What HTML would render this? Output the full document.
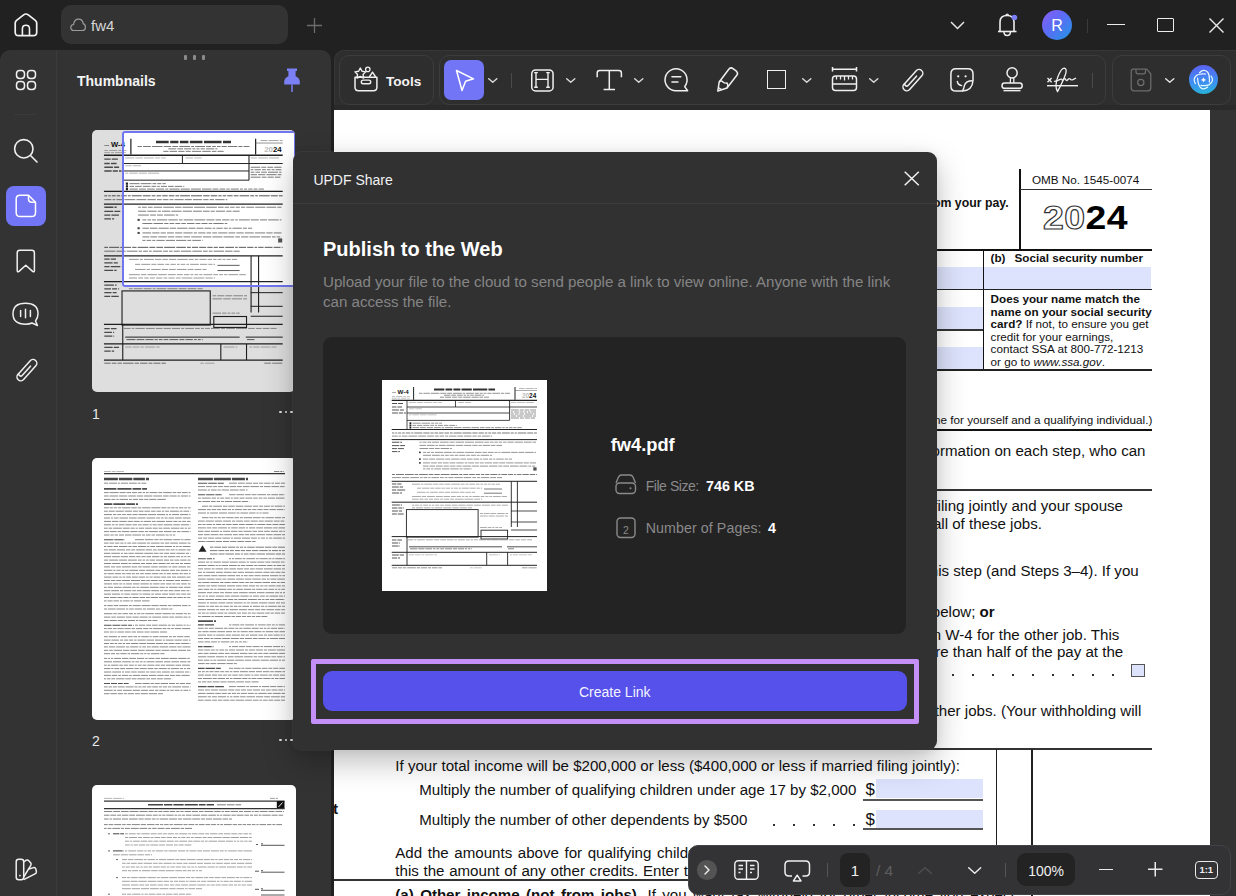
<!DOCTYPE html><html><head><meta charset="utf-8"><style>
html,body{margin:0;padding:0;}
body{width:1236px;height:896px;overflow:hidden;position:relative;background:#212121;font-family:"Liberation Sans",sans-serif;}
</style></head><body>
<svg style="position:absolute;left:14px;top:12px;width:24px;height:25px;overflow:visible" viewBox="0 0 24 25" ><path d="M1.2 11 Q1.2 9.4 2.6 8.3 L9.6 2.9 Q11.95 1.1 14.3 2.9 L21.3 8.3 Q22.7 9.4 22.7 11 V20.2 Q22.7 23.7 19.2 23.7 H4.7 Q1.2 23.7 1.2 20.2 Z" fill="none" stroke="#f2f2f2" stroke-width="1.7" stroke-linejoin="round"/><path d="M8.4 23.7 V16.8 Q8.4 13.2 11.95 13.2 Q15.5 13.2 15.5 16.8 V23.7" fill="none" stroke="#f2f2f2" stroke-width="1.6"/></svg>
<div style="position:absolute;left:61px;top:5px;width:227px;height:39px;border-radius:10px;background:#333333"></div>
<svg style="position:absolute;left:70px;top:18px;width:16px;height:14px;overflow:visible" viewBox="0 0 16 14" ><path d="M4 12.5 Q0.8 12.5 0.8 9.5 Q0.8 6.8 3.6 6.5 Q4.2 1.2 8.6 1.2 Q12.6 1.2 13.2 5.6 Q15.4 6.2 15.4 9.2 Q15.4 12.5 12 12.5 Z" fill="none" stroke="#9c9c9c" stroke-width="1.2"/></svg>
<div style="position:absolute;left:91px;top:17.42px;font-size:15px;line-height:17.25px;height:17.25px;color:#d6d6d6;font-weight:normal;white-space:nowrap;font-family:'Liberation Sans', sans-serif;">fw4</div>
<svg style="position:absolute;left:307px;top:18px;width:15px;height:15px;overflow:visible" viewBox="0 0 15 15" ><path d="M7.5 0 V15 M0 7.5 H15" stroke="#6c6c6c" stroke-width="1.3"/></svg>
<svg style="position:absolute;left:950px;top:21px;width:15px;height:9px;overflow:visible" viewBox="0 0 15 9" ><path d="M1 1 L7.5 7.5 L14 1" fill="none" stroke="#e6e6e6" stroke-width="1.5"/></svg>
<svg style="position:absolute;left:997px;top:12px;width:22px;height:25px;overflow:visible" viewBox="0 0 22 25" ><path d="M3 19 V10 Q3 3.5 10 3.5 Q17 3.5 17 10 V19" fill="none" stroke="#ededed" stroke-width="1.6"/><path d="M1 19.5 H19.5" stroke="#ededed" stroke-width="1.6"/><path d="M7 20 Q7 23.5 10.2 23.5 Q13.4 23.5 13.4 20" fill="none" stroke="#ededed" stroke-width="1.5"/><path d="M8.6 3.5 Q10.2 0.8 11.8 3.5" fill="none" stroke="#ededed" stroke-width="1.4"/><circle cx="17.4" cy="5.5" r="2.8" fill="#7b80f6"/></svg>
<div style="position:absolute;left:1042px;top:10px;width:30px;height:30px;border-radius:50%;background:linear-gradient(135deg,#8b5cf6 0%,#5b6cf5 45%,#1e98e4 100%)"></div>
<div style="position:absolute;left:1051px;top:17.02px;font-size:16px;line-height:18.40px;height:18.40px;color:#ffffff;font-weight:normal;white-space:nowrap;font-family:'Liberation Sans', sans-serif;width:12px;text-align:center">R</div>
<div style="position:absolute;left:1087px;top:19px;width:1px;height:14px;background:#3a3a3a"></div>
<div style="position:absolute;left:1107px;top:23.5px;width:18px;height:1.6px;background:#ececec"></div>
<div style="position:absolute;left:1157px;top:17.5px;width:15px;height:12px;border:1.6px solid #ececec;border-radius:1px"></div>
<svg style="position:absolute;left:1209px;top:18px;width:15px;height:15px;overflow:visible" viewBox="0 0 15 15" ><path d="M0.5 0.5 L14.5 14.5 M14.5 0.5 L0.5 14.5" stroke="#ececec" stroke-width="1.4"/></svg>
<div style="position:absolute;left:0;top:50px;width:331px;height:860px;border-radius:10px 10px 0 0;background:#333333"></div>
<div style="position:absolute;left:56px;top:50px;width:1px;height:846px;background:#3b3b3b"></div>
<svg style="position:absolute;left:15px;top:69px;width:22px;height:22px;overflow:visible" viewBox="0 0 22 22" ><rect x="1.5" y="1.5" width="8" height="8" rx="3.2" fill="none" stroke="#f0f0f0" stroke-width="1.5"/><rect x="1.5" y="12.5" width="8" height="8" rx="3.2" fill="none" stroke="#f0f0f0" stroke-width="1.5"/><rect x="12.5" y="1.5" width="8" height="8" rx="3.2" fill="none" stroke="#f0f0f0" stroke-width="1.5"/><rect x="12.5" y="12.5" width="8" height="8" rx="3.2" fill="none" stroke="#f0f0f0" stroke-width="1.5"/></svg>
<div style="position:absolute;left:14px;top:114px;width:23px;height:1px;background:#3a3a3a"></div>
<svg style="position:absolute;left:13px;top:138px;width:26px;height:26px;overflow:visible" viewBox="0 0 26 26" ><circle cx="10.8" cy="10.8" r="9.2" fill="none" stroke="#f0f0f0" stroke-width="1.6"/><path d="M17.5 17.5 L24 24" stroke="#f0f0f0" stroke-width="1.6" stroke-linecap="round"/></svg>
<div style="position:absolute;left:6px;top:186px;width:40px;height:40px;border-radius:8px;background:#7276f6"></div>
<svg style="position:absolute;left:15px;top:194px;width:22px;height:24px;overflow:visible" viewBox="0 0 22 24" ><path d="M5 1.2 H13.5 L20.5 8.2 V18.5 Q20.5 22.6 16.5 22.6 H5 Q1.2 22.6 1.2 18.5 V5 Q1.2 1.2 5 1.2 Z" fill="none" stroke="#fff" stroke-width="1.5" stroke-linejoin="round"/><path d="M13.5 1.2 V5 Q13.5 8.2 16.8 8.2 H20.5" fill="none" stroke="#fff" stroke-width="1.5"/></svg>
<svg style="position:absolute;left:16px;top:249px;width:20px;height:25px;overflow:visible" viewBox="0 0 20 25" ><path d="M1.2 3.8 Q1.2 1.2 3.8 1.2 H15.8 Q18.4 1.2 18.4 3.8 V21.6 Q18.4 23.6 16.6 22.4 L9.8 16.2 L3 22.4 Q1.2 23.6 1.2 21.6 Z" fill="none" stroke="#f0f0f0" stroke-width="1.5" stroke-linejoin="round"/></svg>
<svg style="position:absolute;left:12px;top:302px;width:27px;height:25px;overflow:visible" viewBox="0 0 27 25" ><path d="M23.5 19 Q26 16 26 11.8 Q26 1.2 13.5 1.2 Q1 1.2 1 11.8 Q1 22.2 13.5 22.2 Q17.5 22.2 20 21 L25.5 23.5 Z" fill="none" stroke="#f0f0f0" stroke-width="1.5" stroke-linejoin="round"/><path d="M8.6 8.5 V14.5 M13.5 7.3 V15.7 M18.4 8.5 V14.5" stroke="#f0f0f0" stroke-width="1.5" stroke-linecap="round"/></svg>
<svg style="position:absolute;left:16px;top:358px;width:22px;height:24px;overflow:visible" viewBox="-11 -12 22 24" ><g transform="rotate(42)"><path d="M0 -5.2 V7.3 A1.9 1.9 0 0 1 -3.8 7.3 V-9 A3.8 3.8 0 0 1 3.8 -9 V9.3 A3.8 3.8 0 0 1 -3.8 9.3 V7" fill="none" stroke="#f0f0f0" stroke-width="1.5" stroke-linecap="round"/></g></svg>
<svg style="position:absolute;left:15px;top:858px;width:23px;height:23px;overflow:visible" viewBox="0 0 23 23" ><rect x="1.2" y="1.2" width="7.5" height="20.5" rx="2.5" fill="none" stroke="#f0f0f0" stroke-width="1.5"/><path d="M8.7 4 L11.2 2.2 Q12.5 1.5 13.6 2.6 L15.8 5 Q16.5 6.2 15.8 7.3 L8.7 19" fill="none" stroke="#f0f0f0" stroke-width="1.5" stroke-linejoin="round"/><path d="M13 11.2 L18.6 9.6 Q20.2 9.3 20.8 10.8 L21.4 13.6 Q21.6 15.3 20 15.8 L8.7 21.7" fill="none" stroke="#f0f0f0" stroke-width="1.5" stroke-linejoin="round"/><circle cx="4.9" cy="17.6" r="0.9" fill="#f0f0f0"/></svg>
<div style="position:absolute;left:184px;top:55px;width:3px;height:5px;border-radius:1px;background:#8a8a8a"></div>
<div style="position:absolute;left:193px;top:55px;width:3px;height:5px;border-radius:1px;background:#8a8a8a"></div>
<div style="position:absolute;left:202px;top:55px;width:3px;height:5px;border-radius:1px;background:#8a8a8a"></div>
<div style="position:absolute;left:77px;top:73.03px;font-size:14px;line-height:16.10px;height:16.10px;color:#f4f4f4;font-weight:bold;white-space:nowrap;font-family:'Liberation Sans', sans-serif;">Thumbnails</div>
<svg style="position:absolute;left:283px;top:68px;width:18px;height:25px;overflow:visible" viewBox="0 0 18 25" ><path d="M4 0.5 H14 V3 H12.6 V8.2 Q16.8 10 16.8 14 V16.6 H1.2 V14 Q1.2 10 5.4 8.2 V3 H4 Z" fill="#7b80f7"/><path d="M9 16.5 V24" stroke="#7b80f7" stroke-width="1.5"/></svg>
<div style="position:absolute;left:92px;top:406.33px;font-size:14px;line-height:16.10px;height:16.10px;color:#e8e8e8;font-weight:normal;white-space:nowrap;font-family:'Liberation Sans', sans-serif;">1</div>
<div style="position:absolute;left:92px;top:732.83px;font-size:14px;line-height:16.10px;height:16.10px;color:#e8e8e8;font-weight:normal;white-space:nowrap;font-family:'Liberation Sans', sans-serif;">2</div>
<div style="position:absolute;left:279px;top:410.7px;width:2.6px;height:2.6px;border-radius:50%;background:#e0e0e0"></div>
<div style="position:absolute;left:284.5px;top:410.7px;width:2.6px;height:2.6px;border-radius:50%;background:#e0e0e0"></div>
<div style="position:absolute;left:290px;top:410.7px;width:2.6px;height:2.6px;border-radius:50%;background:#e0e0e0"></div>
<div style="position:absolute;left:279px;top:738.7px;width:2.6px;height:2.6px;border-radius:50%;background:#e0e0e0"></div>
<div style="position:absolute;left:284.5px;top:738.7px;width:2.6px;height:2.6px;border-radius:50%;background:#e0e0e0"></div>
<div style="position:absolute;left:290px;top:738.7px;width:2.6px;height:2.6px;border-radius:50%;background:#e0e0e0"></div>
<div style="position:absolute;left:92px;top:130px;width:203px;height:262px;border-radius:5px;background:#fff;overflow:hidden"><svg width="100%" height="100%" viewBox="0 0 165 211" preserveAspectRatio="none" style="position:absolute;left:0;top:0"><text x="15.5" y="13.6" font-size="6.2" font-weight="bold" font-family="Liberation Sans" fill="#111">W-4</text><path d="M10 12.5 H14" stroke="#999" stroke-width="0.8" stroke-dasharray="4.27 0.90"/><path d="M10 16.5 H28" stroke="#aaa" stroke-width="0.7" stroke-dasharray="3.06 0.90 6.56 0.90 2.51 0.90 5.75 0.90"/><path d="M10 18.2 H28" stroke="#aaa" stroke-width="0.7" stroke-dasharray="4.56 0.90 2.41 0.90 5.55 0.90 2.26 0.90"/><path d="M31.6 7 V19.8" stroke="#222" stroke-width="1.0"/><path d="M52 9.6 H113" stroke="#333" stroke-width="2.0" stroke-dasharray="10.34 1.20 6.70 1.20 6.91 1.20 10.25 1.20 14.27 1.20 7.24 1.20"/><path d="M37 13.3 H128" stroke="#777" stroke-width="0.8" stroke-dasharray="3.56 0.90 6.39 0.90 8.63 0.90 6.04 0.90 4.78 0.90 8.83 0.90 2.33 0.90 8.01 0.90 4.03 0.90 3.01 0.90 2.82 0.90 4.16 0.90 7.71 0.90 3.27 0.90 6.07 0.90"/><path d="M62 15.2 H102" stroke="#777" stroke-width="0.8" stroke-dasharray="6.47 0.90 4.61 0.90 5.83 0.90 2.44 0.90 2.42 0.90 3.44 0.90 6.76 0.90 4.99 0.90"/><path d="M58 17.2 H107" stroke="#777" stroke-width="0.8" stroke-dasharray="4.20 0.90 6.10 0.90 5.17 0.90 4.10 0.90 7.56 0.90 6.89 0.90 3.71 0.90 6.02 0.90"/><path d="M133 7 V19.8" stroke="#222" stroke-width="1.0"/><path d="M137 8.5 H155" stroke="#999" stroke-width="0.7" stroke-dasharray="5.68 0.90 8.13 0.90 7.11 0.90"/><path d="M133 10.5 H155" stroke="#555" stroke-width="0.5"/><text x="140" y="17.6" font-size="6.4" font-weight="bold" font-family="Liberation Sans" fill="#111"><tspan fill="#bbb">20</tspan>24</text><path d="M9.7 20.3 H155" stroke="#222" stroke-width="1.2"/><path d="M10 23.5 H21" stroke="#555" stroke-width="1.1" stroke-dasharray="5.15 0.90 7.92 0.90"/><path d="M10 27 H20" stroke="#555" stroke-width="1.1" stroke-dasharray="4.47 0.90 5.67 0.90"/><path d="M10 30 H22" stroke="#555" stroke-width="1.1" stroke-dasharray="7.03 0.90 4.61 0.90"/><path d="M10 33 H24" stroke="#555" stroke-width="1.1" stroke-dasharray="5.96 0.90 4.16 0.90 6.67 0.90"/><path d="M25 27 H155" stroke="#222" stroke-width="0.8"/><path d="M25 33 H127.6" stroke="#222" stroke-width="0.8"/><path d="M25 40.4 H127.6" stroke="#222" stroke-width="0.8"/><path d="M25 20.3 V49.5" stroke="#222" stroke-width="0.8"/><path d="M73.5 20.3 V27" stroke="#222" stroke-width="0.8"/><path d="M127.6 20.3 V40.4" stroke="#222" stroke-width="0.9"/><path d="M27 22.5 H60" stroke="#999" stroke-width="0.6" stroke-dasharray="7.35 0.90 6.01 0.90 8.13 0.90 4.20 0.90 6.87 0.90"/><path d="M76 22.5 H90" stroke="#999" stroke-width="0.6" stroke-dasharray="6.16 0.90 6.06 0.90"/><path d="M129 22.5 H152" stroke="#999" stroke-width="0.6" stroke-dasharray="5.19 0.90 7.88 0.90 8.61 0.90"/><path d="M27 28.8 H40" stroke="#999" stroke-width="0.6" stroke-dasharray="5.32 0.90 6.65 0.90"/><path d="M27 34.8 H55" stroke="#999" stroke-width="0.6" stroke-dasharray="2.42 0.90 6.91 0.90 6.53 0.90 8.95 0.90"/><path d="M129 30 H154" stroke="#777" stroke-width="0.8" stroke-dasharray="7.75 0.90 3.99 0.90 4.70 0.90 6.68 0.90"/><path d="M129 32 H154" stroke="#777" stroke-width="0.8" stroke-dasharray="2.16 0.90 5.23 0.90 3.18 0.90 2.82 0.90 2.41 0.90 7.38 0.90"/><path d="M129 34 H154" stroke="#777" stroke-width="0.8" stroke-dasharray="2.91 0.90 3.73 0.90 4.74 0.90 8.10 0.90 2.56 0.90"/><path d="M129 36 H154" stroke="#777" stroke-width="0.8" stroke-dasharray="5.14 0.90 5.85 0.90 8.18 0.90 7.73 0.90"/><path d="M129 38 H154" stroke="#777" stroke-width="0.8" stroke-dasharray="8.05 0.90 3.95 0.90 4.91 0.90 4.51 0.90"/><rect x="27.5" y="42.300000000000004" width="1.8" height="1.8" fill="#222"/><path d="M30.5 43.2 H60" stroke="#666" stroke-width="0.7" stroke-dasharray="8.19 0.90 8.70 0.90 3.06 0.90 3.23 0.90 3.62 0.90"/><rect x="27.5" y="44.5" width="1.8" height="1.8" fill="#222"/><path d="M30.5 45.4 H75" stroke="#666" stroke-width="0.7" stroke-dasharray="3.63 0.90 5.39 0.90 6.12 0.90 3.84 0.90 2.03 0.90 4.93 0.90 4.58 0.90 5.96 0.90 8.67 0.90"/><rect x="27.5" y="46.7" width="1.8" height="1.8" fill="#222"/><path d="M30.5 47.6 H140" stroke="#666" stroke-width="0.7" stroke-dasharray="6.83 0.90 5.61 0.90 6.32 0.90 6.73 0.90 2.38 0.90 8.30 0.90 7.46 0.90 8.12 0.90 7.59 0.90 4.75 0.90 4.79 0.90 2.72 0.90 6.44 0.90 2.44 0.90 2.47 0.90 3.46 0.90 3.14 0.90 4.38 0.90"/><path d="M9.7 49.5 H155" stroke="#222" stroke-width="1.0"/><path d="M10 53.0 H155" stroke="#555" stroke-width="0.8" stroke-dasharray="2.37 0.90 2.00 0.90 3.06 0.90 2.71 0.90 4.55 0.90 2.18 0.90 8.12 0.90 6.30 0.90 3.04 0.90 3.77 0.90 4.43 0.90 4.55 0.90 2.86 0.90 7.94 0.90 8.95 0.90 5.26 0.90 5.39 0.90 2.60 0.90 2.72 0.90 4.40 0.90 3.85 0.90 7.80 0.90 3.13 0.90 2.16 0.90 8.66 0.90 5.70 0.90 3.03 0.90"/><path d="M10 56.1 H110" stroke="#777" stroke-width="0.8" stroke-dasharray="5.80 0.90 2.19 0.90 5.70 0.90 8.85 0.90 8.04 0.90 6.87 0.90 3.83 0.90 4.57 0.90 3.17 0.90 7.40 0.90 5.73 0.90 7.45 0.90 4.31 0.90 3.56 0.90 7.68 0.90 8.89 0.90"/><path d="M9.7 59.6 H155" stroke="#222" stroke-width="1.0"/><path d="M10 62.2 H20" stroke="#555" stroke-width="1.1" stroke-dasharray="7.41 0.90 7.22 0.90"/><path d="M10 65.6 H23" stroke="#555" stroke-width="1.0" stroke-dasharray="7.27 0.90 6.96 0.90"/><path d="M10 68.6 H22" stroke="#555" stroke-width="1.0" stroke-dasharray="4.91 0.90 6.07 0.90"/><path d="M10 71.6 H18" stroke="#555" stroke-width="1.0" stroke-dasharray="5.42 0.90 4.12 0.90"/><path d="M37.5 62.2 H154" stroke="#7a7a7a" stroke-width="0.8" stroke-dasharray="2.20 0.90 3.96 0.90 3.81 0.90 6.85 0.90 8.70 0.90 5.13 0.90 8.56 0.90 8.92 0.90 8.69 0.90 4.55 0.90 3.54 0.90 3.59 0.90 3.38 0.90 3.43 0.90 6.37 0.90 8.30 0.90 7.88 0.90 5.36 0.90"/><path d="M37.5 65.4 H120" stroke="#7a7a7a" stroke-width="0.8" stroke-dasharray="6.57 0.90 7.60 0.90 2.59 0.90 6.62 0.90 8.37 0.90 7.48 0.90 7.25 0.90 5.35 0.90 3.25 0.90 7.52 0.90 4.33 0.90 7.61 0.90"/><path d="M37.5 68.5 H70" stroke="#7a7a7a" stroke-width="0.8" stroke-dasharray="8.80 0.90 4.77 0.90 4.81 0.90 8.63 0.90 7.07 0.90"/><path d="M41 72.4 H154" stroke="#7a7a7a" stroke-width="0.8" stroke-dasharray="3.19 0.90 2.89 0.90 3.06 0.90 8.33 0.90 7.65 0.90 3.02 0.90 7.79 0.90 8.86 0.90 6.60 0.90 4.45 0.90 5.84 0.90 2.92 0.90 2.10 0.90 8.80 0.90 6.55 0.90 5.69 0.90 8.54 0.90 5.04 0.90"/><path d="M41 75.3 H110" stroke="#7a7a7a" stroke-width="0.8" stroke-dasharray="8.10 0.90 7.78 0.90 3.48 0.90 3.76 0.90 4.05 0.90 3.68 0.90 6.11 0.90 3.82 0.90 4.93 0.90 2.92 0.90 8.37 0.90 4.48 0.90"/><path d="M41 79.1 H130" stroke="#7a7a7a" stroke-width="0.8" stroke-dasharray="5.21 0.90 6.08 0.90 8.33 0.90 4.94 0.90 8.42 0.90 5.51 0.90 5.72 0.90 5.66 0.90 2.13 0.90 5.08 0.90 3.28 0.90 2.03 0.90 7.59 0.90 3.21 0.90 5.31 0.90"/><path d="M41 82.9 H154" stroke="#7a7a7a" stroke-width="0.8" stroke-dasharray="7.08 0.90 5.90 0.90 4.28 0.90 5.63 0.90 5.89 0.90 7.49 0.90 2.74 0.90 5.92 0.90 3.74 0.90 3.94 0.90 7.41 0.90 5.55 0.90 5.93 0.90 7.32 0.90 8.39 0.90 5.10 0.90 6.29 0.90"/><path d="M41 86.1 H154" stroke="#7a7a7a" stroke-width="0.8" stroke-dasharray="5.54 0.90 5.59 0.90 6.85 0.90 5.17 0.90 5.73 0.90 5.35 0.90 8.59 0.90 6.89 0.90 8.14 0.90 8.60 0.90 3.82 0.90 5.92 0.90 8.60 0.90 7.88 0.90 2.96 0.90 2.85 0.90 5.09 0.90"/><path d="M41 88.9 H90" stroke="#7a7a7a" stroke-width="0.8" stroke-dasharray="2.51 0.90 3.68 0.90 2.51 0.90 6.69 0.90 7.49 0.90 8.28 0.90 3.08 0.90 7.01 0.90 6.62 0.90"/><rect x="37" y="71.60000000000001" width="1.8" height="1.6" fill="#444"/><rect x="37" y="78.3" width="1.8" height="1.6" fill="#444"/><rect x="37" y="82.10000000000001" width="1.8" height="1.6" fill="#444"/><rect x="151.3" y="87.3" width="3.3" height="3.3" fill="#555"/><path d="M10 94.5 H155" stroke="#555" stroke-width="0.8" stroke-dasharray="3.00 0.90 8.18 0.90 8.77 0.90 3.54 0.90 8.67 0.90 4.79 0.90 5.41 0.90 8.93 0.90 7.83 0.90 3.13 0.90 5.02 0.90 5.61 0.90 4.37 0.90 3.37 0.90 4.23 0.90 7.06 0.90 2.14 0.90 5.88 0.90 5.08 0.90 2.13 0.90 4.32 0.90 6.37 0.90 5.59 0.90 2.45 0.90"/><path d="M10 97.6 H120" stroke="#777" stroke-width="0.8" stroke-dasharray="8.90 0.90 7.52 0.90 8.80 0.90 2.73 0.90 3.86 0.90 2.28 0.90 7.45 0.90 3.89 0.90 2.91 0.90 4.96 0.90 8.38 0.90 7.73 0.90 3.81 0.90 3.05 0.90 8.43 0.90 5.99 0.90 6.90 0.90"/><path d="M9.7 101.3 H155" stroke="#222" stroke-width="1.0"/><path d="M10 104 H20" stroke="#555" stroke-width="1.0" stroke-dasharray="4.36 0.90 4.23 0.90"/><path d="M10 107 H21" stroke="#555" stroke-width="1.0" stroke-dasharray="6.75 0.90 5.70 0.90"/><path d="M10 110 H24" stroke="#555" stroke-width="1.0" stroke-dasharray="4.29 0.90 7.75 0.90 6.54 0.90"/><path d="M10 113 H20" stroke="#555" stroke-width="1.0" stroke-dasharray="7.21 0.90 4.33 0.90"/><path d="M30 104.2 H118" stroke="#888" stroke-width="0.7" stroke-dasharray="7.99 0.90 2.47 0.90 8.04 0.90 5.18 0.90 4.37 0.90 5.87 0.90 8.49 0.90 3.88 0.90 2.90 0.90 5.69 0.90 3.67 0.90 2.77 0.90 3.13 0.90 2.35 0.90 3.41 0.90 4.18 0.90"/><path d="M35 108.2 H100" stroke="#888" stroke-width="0.7" stroke-dasharray="4.14 0.90 7.32 0.90 4.03 0.90 5.50 0.90 3.25 0.90 4.43 0.90 2.13 0.90 3.75 0.90 2.11 0.90 7.13 0.90 5.86 0.90 3.33 0.90 5.32 0.90"/><path d="M35 112.3 H93" stroke="#888" stroke-width="0.7" stroke-dasharray="8.54 0.90 2.74 0.90 7.73 0.90 5.03 0.90 5.47 0.90 7.84 0.90 4.75 0.90 5.55 0.90 6.81 0.90"/><path d="M102 109 H120" stroke="#444" stroke-width="0.7"/><path d="M102 113.2 H120" stroke="#444" stroke-width="0.7"/><path d="M30 116.5 H125" stroke="#888" stroke-width="0.7" stroke-dasharray="8.88 0.90 4.40 0.90 7.83 0.90 6.95 0.90 6.45 0.90 4.83 0.90 4.43 0.90 2.38 0.90 2.91 0.90 2.50 0.90 7.19 0.90 3.79 0.90 3.14 0.90 2.59 0.90 7.89 0.90 8.09 0.90"/><path d="M30 119.2 H100" stroke="#888" stroke-width="0.7" stroke-dasharray="6.69 0.90 3.97 0.90 3.70 0.90 4.05 0.90 5.22 0.90 3.10 0.90 5.12 0.90 3.84 0.90 8.73 0.90 8.81 0.90 5.83 0.90 3.71 0.90"/><path d="M129.3 101.3 V147" stroke="#222" stroke-width="0.9"/><path d="M135.4 101.3 V147" stroke="#222" stroke-width="0.9"/><path d="M9.7 122.2 H155" stroke="#222" stroke-width="1.0"/><path d="M10 125 H20" stroke="#555" stroke-width="1.0" stroke-dasharray="7.86 0.90 5.24 0.90"/><path d="M10 128 H22" stroke="#555" stroke-width="1.0" stroke-dasharray="5.43 0.90 4.00 0.90 5.53 0.90"/><path d="M10 131 H20" stroke="#555" stroke-width="1.0" stroke-dasharray="5.90 0.90 6.01 0.90"/><path d="M10 134 H22" stroke="#555" stroke-width="1.0" stroke-dasharray="4.80 0.90 6.02 0.90"/><path d="M30 125.2 H126" stroke="#888" stroke-width="0.7" stroke-dasharray="2.03 0.90 3.85 0.90 2.63 0.90 4.80 0.90 2.29 0.90 2.16 0.90 4.13 0.90 3.63 0.90 6.10 0.90 5.70 0.90 7.25 0.90 6.60 0.90 7.01 0.90 8.15 0.90 4.73 0.90 4.28 0.90 8.89 0.90"/><path d="M30 127.8 H90" stroke="#888" stroke-width="0.7" stroke-dasharray="3.05 0.90 7.07 0.90 6.50 0.90 2.31 0.90 7.85 0.90 8.24 0.90 6.39 0.90 7.14 0.90 7.69 0.90"/><rect x="24.4" y="129.6" width="71.7" height="27.5" fill="none" stroke="#222" stroke-width="0.9"/><path d="M98 133.5 H126" stroke="#888" stroke-width="0.7" stroke-dasharray="2.98 0.90 5.67 0.90 5.53 0.90 7.84 0.90 7.63 0.90"/><path d="M98 136 H126" stroke="#888" stroke-width="0.7" stroke-dasharray="7.78 0.90 6.09 0.90 8.25 0.90 6.78 0.90"/><path d="M98 147.5 H120" stroke="#888" stroke-width="0.7" stroke-dasharray="6.85 0.90 3.61 0.90 2.22 0.90 2.93 0.90 4.52 0.90"/><rect x="99" y="150.2" width="26.6" height="8.8" fill="none" stroke="#222" stroke-width="0.9"/><path d="M129 131 H155" stroke="#222" stroke-width="0.8"/><path d="M129 142 H155" stroke="#222" stroke-width="0.8"/><path d="M129 150 H155" stroke="#222" stroke-width="0.8"/><path d="M9.7 156.6 H155" stroke="#222" stroke-width="1.0"/><path d="M10 160 H20" stroke="#555" stroke-width="1.0" stroke-dasharray="4.42 0.90 7.34 0.90"/><path d="M10 163 H18" stroke="#555" stroke-width="1.0" stroke-dasharray="6.23 0.90 6.51 0.90"/><path d="M10 166 H18" stroke="#555" stroke-width="1.0" stroke-dasharray="6.50 0.90 6.72 0.90"/><path d="M26 159.8 H150" stroke="#888" stroke-width="0.7" stroke-dasharray="5.43 0.90 2.02 0.90 7.58 0.90 7.24 0.90 5.52 0.90 5.75 0.90 6.62 0.90 2.46 0.90 7.16 0.90 3.77 0.90 2.52 0.90 3.86 0.90 7.11 0.90 3.44 0.90 7.18 0.90 8.83 0.90 5.46 0.90 4.68 0.90 5.35 0.90 6.79 0.90"/><path d="M27 166.8 H120" stroke="#222" stroke-width="0.8"/><path d="M125 166.8 H155" stroke="#222" stroke-width="0.8"/><path d="M28 168.8 H90" stroke="#666" stroke-width="0.8" stroke-dasharray="7.37 0.90 6.32 0.90 6.50 0.90 2.54 0.90 3.03 0.90 3.78 0.90 7.20 0.90 4.13 0.90 5.97 0.90 2.09 0.90 2.42 0.90 3.88 0.90"/><path d="M126 168.8 H132" stroke="#666" stroke-width="0.8" stroke-dasharray="6.70 0.90"/><path d="M25 156.6 V185.3" stroke="#222" stroke-width="0.9"/><path d="M9.7 172.3 H155" stroke="#222" stroke-width="1.0"/><path d="M10 175 H22" stroke="#555" stroke-width="1.0" stroke-dasharray="6.77 0.90 6.70 0.90"/><path d="M10 178 H18" stroke="#555" stroke-width="1.0" stroke-dasharray="5.16 0.90 6.07 0.90"/><path d="M27 174.8 H55" stroke="#999" stroke-width="0.6" stroke-dasharray="5.25 0.90 5.26 0.90 2.83 0.90 8.26 0.90 3.39 0.90"/><path d="M107 174.8 H118" stroke="#999" stroke-width="0.6" stroke-dasharray="8.85 0.90 8.55 0.90"/><path d="M128 174.8 H150" stroke="#999" stroke-width="0.6" stroke-dasharray="2.12 0.90 5.21 0.90 7.74 0.90 8.78 0.90"/><path d="M104.7 172.3 V185.3" stroke="#222" stroke-width="0.9"/><path d="M125.6 172.3 V185.3" stroke="#222" stroke-width="0.9"/><path d="M9.7 185.3 H155" stroke="#222" stroke-width="1.0"/><path d="M10 187.8 H60" stroke="#666" stroke-width="0.7" stroke-dasharray="5.15 0.90 3.88 0.90 3.47 0.90 8.62 0.90 3.47 0.90 6.07 0.90 2.99 0.90 5.67 0.90 8.67 0.90"/><path d="M88 187.8 H100" stroke="#999" stroke-width="0.6" stroke-dasharray="2.93 0.90 7.74 0.90"/><path d="M140 187.8 H155" stroke="#777" stroke-width="0.7" stroke-dasharray="5.56 0.90 8.21 0.90"/></svg><div style="position:absolute;left:29.5px;top:1px;width:174px;height:156px;box-sizing:border-box;border:2.2px solid #7076ef;border-radius:3px;box-shadow:0 0 0 400px rgba(0,0,0,0.13)"></div></div>
<div style="position:absolute;left:92px;top:457.5px;width:204px;height:262px;border-radius:5px;background:#fff;overflow:hidden"><svg width="100%" height="100%" viewBox="0 0 204 262" preserveAspectRatio="none" style="position:absolute;left:0;top:0"><path d="M12 13.5 H32" stroke="#999" stroke-width="0.7" stroke-dasharray="6.92 0.90 3.62 0.90 8.28 0.90"/><path d="M182 13.5 H192" stroke="#666" stroke-width="0.8" stroke-dasharray="5.40 0.90 2.17 0.90 2.03 0.90"/><path d="M12 15.6 H193" stroke="#333" stroke-width="1.3"/><path d="M12 21 H57" stroke="#474747" stroke-width="2.3" stroke-dasharray="13.90 1.00 13.41 1.00 11.62 1.00 9.69 1.00"/><path d="M12 25.2 H54.313903966309496" stroke="#8a8a8a" stroke-width="1.0" stroke-dasharray="4.21 0.90 7.88 0.90 2.01 0.90 7.26 0.90 7.87 0.90 2.84 0.90 8.48 0.90"/><path d="M12 30.9 H55" stroke="#505050" stroke-width="1.7" stroke-dasharray="12.42 1.00 14.11 1.00 8.61 1.00 9.35 1.00"/><path d="M12 34.6 H98.5" stroke="#8a8a8a" stroke-width="1.0" stroke-dasharray="4.75 0.90 8.99 0.90 6.12 0.90 4.52 0.90 5.00 0.90 3.93 0.90 2.34 0.90 2.71 0.90 7.84 0.90 4.00 0.90 8.55 0.90 3.75 0.90 3.86 0.90 5.58 0.90 3.33 0.90"/><path d="M12 38.0 H98.5" stroke="#8a8a8a" stroke-width="1.0" stroke-dasharray="4.61 0.90 8.69 0.90 8.19 0.90 7.68 0.90 6.42 0.90 8.39 0.90 8.58 0.90 5.84 0.90 7.04 0.90 2.35 0.90 7.13 0.90 5.16 0.90"/><path d="M12 41.4 H73.75818053962729" stroke="#8a8a8a" stroke-width="1.0" stroke-dasharray="6.51 0.90 4.00 0.90 2.34 0.90 8.49 0.90 2.89 0.90 5.31 0.90 4.41 0.90 4.08 0.90 7.17 0.90 8.83 0.90"/><path d="M12 46.099999999999994 H46" stroke="#505050" stroke-width="1.7" stroke-dasharray="8.34 1.00 11.90 1.00 8.71 1.00 11.02 1.00"/><path d="M12 49.8 H98.5" stroke="#8a8a8a" stroke-width="1.0" stroke-dasharray="4.76 0.90 3.17 0.90 3.13 0.90 3.46 0.90 8.34 0.90 5.48 0.90 3.54 0.90 8.34 0.90 8.98 0.90 5.15 0.90 2.98 0.90 3.35 0.90 2.64 0.90 4.39 0.90 2.64 0.90 3.67 0.90"/><path d="M12 53.199999999999996 H98.5" stroke="#8a8a8a" stroke-width="1.0" stroke-dasharray="3.81 0.90 5.99 0.90 8.21 0.90 7.25 0.90 4.89 0.90 4.90 0.90 5.67 0.90 4.64 0.90 4.37 0.90 2.43 0.90 3.94 0.90 8.77 0.90 2.88 0.90 5.52 0.90 6.41 0.90"/><path d="M12 56.599999999999994 H98.5" stroke="#8a8a8a" stroke-width="1.0" stroke-dasharray="8.04 0.90 3.51 0.90 3.90 0.90 3.74 0.90 4.80 0.90 5.12 0.90 8.68 0.90 7.94 0.90 8.11 0.90 2.15 0.90 2.23 0.90 6.97 0.90 8.27 0.90 5.31 0.90"/><path d="M12 59.99999999999999 H98.5" stroke="#8a8a8a" stroke-width="1.0" stroke-dasharray="6.11 0.90 2.00 0.90 4.74 0.90 8.49 0.90 7.78 0.90 7.99 0.90 8.81 0.90 3.74 0.90 2.76 0.90 3.08 0.90 5.66 0.90 6.77 0.90 8.59 0.90"/><path d="M12 63.39999999999999 H98.5" stroke="#8a8a8a" stroke-width="1.0" stroke-dasharray="7.05 0.90 6.53 0.90 7.35 0.90 5.20 0.90 5.86 0.90 2.28 0.90 7.48 0.90 3.63 0.90 8.44 0.90 6.52 0.90 4.13 0.90 2.90 0.90 3.76 0.90 6.45 0.90"/><path d="M12 66.8 H98.5" stroke="#8a8a8a" stroke-width="1.0" stroke-dasharray="6.89 0.90 2.78 0.90 2.49 0.90 5.67 0.90 6.08 0.90 4.72 0.90 3.57 0.90 6.21 0.90 2.07 0.90 4.11 0.90 5.22 0.90 8.71 0.90 6.51 0.90 8.19 0.90 5.33 0.90"/><path d="M12 70.2 H98.5" stroke="#8a8a8a" stroke-width="1.0" stroke-dasharray="3.64 0.90 3.73 0.90 8.72 0.90 6.93 0.90 4.15 0.90 2.15 0.90 5.49 0.90 6.72 0.90 4.94 0.90 3.80 0.90 6.67 0.90 8.48 0.90 3.59 0.90 2.24 0.90 4.37 0.90"/><path d="M12 73.60000000000001 H98.5" stroke="#8a8a8a" stroke-width="1.0" stroke-dasharray="4.94 0.90 6.78 0.90 3.39 0.90 7.58 0.90 7.17 0.90 5.53 0.90 3.44 0.90 8.79 0.90 4.18 0.90 7.74 0.90 3.62 0.90 3.55 0.90 7.32 0.90 4.06 0.90"/><path d="M12 77.00000000000001 H83.2379215172874" stroke="#8a8a8a" stroke-width="1.0" stroke-dasharray="5.47 0.90 3.31 0.90 3.56 0.90 4.92 0.90 6.66 0.90 8.64 0.90 3.02 0.90 4.75 0.90 3.49 0.90 8.82 0.90 2.99 0.90 2.36 0.90 2.42 0.90"/><path d="M12 81.70000000000002 H32.899825444404996" stroke="#555" stroke-width="1.15" stroke-dasharray="9.39 0.90 9.30 0.90 8.40 0.90"/><path d="M43 81.70000000000002 H98.5" stroke="#8a8a8a" stroke-width="1.0" stroke-dasharray="8.98 0.90 8.52 0.90 4.30 0.90 3.30 0.90 8.55 0.90 7.22 0.90 2.22 0.90 6.65 0.90"/><path d="M12 85.10000000000002 H98.5" stroke="#8a8a8a" stroke-width="1.0" stroke-dasharray="4.65 0.90 4.62 0.90 4.32 0.90 3.18 0.90 2.02 0.90 3.96 0.90 4.46 0.90 8.69 0.90 2.87 0.90 8.75 0.90 3.45 0.90 4.50 0.90 7.75 0.90 7.75 0.90 5.03 0.90"/><path d="M12 88.50000000000003 H98.5" stroke="#8a8a8a" stroke-width="1.0" stroke-dasharray="2.34 0.90 5.31 0.90 4.61 0.90 8.44 0.90 3.35 0.90 4.55 0.90 8.28 0.90 2.21 0.90 4.88 0.90 7.68 0.90 7.37 0.90 2.28 0.90 2.24 0.90 2.44 0.90 8.44 0.90"/><path d="M12 91.90000000000003 H98.5" stroke="#8a8a8a" stroke-width="1.0" stroke-dasharray="3.80 0.90 7.23 0.90 8.29 0.90 4.37 0.90 3.91 0.90 8.70 0.90 6.32 0.90 3.84 0.90 7.02 0.90 4.22 0.90 3.93 0.90 2.03 0.90 7.29 0.90 8.42 0.90"/><path d="M12 95.30000000000004 H98.5" stroke="#8a8a8a" stroke-width="1.0" stroke-dasharray="6.44 0.90 8.60 0.90 2.17 0.90 3.64 0.90 5.33 0.90 8.70 0.90 8.68 0.90 4.71 0.90 3.76 0.90 5.01 0.90 5.45 0.90 8.50 0.90 3.28 0.90 7.62 0.90"/><path d="M12 98.70000000000005 H98.5" stroke="#8a8a8a" stroke-width="1.0" stroke-dasharray="7.17 0.90 7.76 0.90 7.41 0.90 6.25 0.90 4.29 0.90 4.24 0.90 4.53 0.90 7.48 0.90 2.55 0.90 3.38 0.90 7.27 0.90 3.73 0.90 2.45 0.90 2.24 0.90 5.87 0.90"/><path d="M12 102.10000000000005 H98.5" stroke="#8a8a8a" stroke-width="1.0" stroke-dasharray="4.28 0.90 8.86 0.90 8.18 0.90 8.91 0.90 3.85 0.90 2.59 0.90 2.67 0.90 5.49 0.90 6.97 0.90 5.13 0.90 3.64 0.90 4.92 0.90 6.34 0.90 6.72 0.90"/><path d="M12 105.50000000000006 H98.5" stroke="#8a8a8a" stroke-width="1.0" stroke-dasharray="7.24 0.90 7.93 0.90 6.65 0.90 2.85 0.90 7.89 0.90 4.06 0.90 5.97 0.90 4.61 0.90 7.17 0.90 3.39 0.90 3.73 0.90 3.72 0.90 3.07 0.90 8.19 0.90"/><path d="M12 108.90000000000006 H98.5" stroke="#8a8a8a" stroke-width="1.0" stroke-dasharray="6.05 0.90 4.28 0.90 4.77 0.90 8.95 0.90 5.55 0.90 3.62 0.90 7.66 0.90 6.57 0.90 8.94 0.90 2.72 0.90 5.32 0.90 7.73 0.90 7.88 0.90"/><path d="M12 112.30000000000007 H98.5" stroke="#8a8a8a" stroke-width="1.0" stroke-dasharray="8.40 0.90 2.28 0.90 4.06 0.90 2.83 0.90 3.33 0.90 8.81 0.90 6.08 0.90 8.51 0.90 4.61 0.90 8.06 0.90 5.14 0.90 3.82 0.90 7.44 0.90 8.62 0.90"/><path d="M12 115.70000000000007 H98.5" stroke="#8a8a8a" stroke-width="1.0" stroke-dasharray="2.74 0.90 6.17 0.90 6.34 0.90 3.52 0.90 4.58 0.90 2.99 0.90 3.43 0.90 3.78 0.90 6.20 0.90 6.56 0.90 3.42 0.90 2.08 0.90 4.29 0.90 6.75 0.90 3.30 0.90 4.19 0.90 3.42 0.90"/><path d="M12 119.10000000000008 H98.5" stroke="#8a8a8a" stroke-width="1.0" stroke-dasharray="7.57 0.90 5.84 0.90 2.44 0.90 2.71 0.90 4.77 0.90 5.85 0.90 6.47 0.90 2.64 0.90 3.15 0.90 6.87 0.90 4.87 0.90 3.98 0.90 4.15 0.90 8.67 0.90 4.19 0.90"/><path d="M12 122.50000000000009 H98.5" stroke="#8a8a8a" stroke-width="1.0" stroke-dasharray="5.97 0.90 4.50 0.90 4.92 0.90 8.05 0.90 8.98 0.90 4.55 0.90 3.38 0.90 7.10 0.90 3.43 0.90 2.04 0.90 8.31 0.90 4.97 0.90 7.74 0.90 4.84 0.90"/><path d="M12 125.90000000000009 H98.5" stroke="#8a8a8a" stroke-width="1.0" stroke-dasharray="8.18 0.90 5.23 0.90 3.14 0.90 2.10 0.90 5.86 0.90 6.48 0.90 8.37 0.90 2.62 0.90 6.36 0.90 4.60 0.90 5.53 0.90 3.02 0.90 3.98 0.90 5.65 0.90 8.48 0.90"/><path d="M12 129.3000000000001 H98.5" stroke="#8a8a8a" stroke-width="1.0" stroke-dasharray="2.76 0.90 5.43 0.90 7.63 0.90 8.77 0.90 3.38 0.90 2.89 0.90 8.60 0.90 8.83 0.90 5.38 0.90 2.37 0.90 8.48 0.90 4.72 0.90 8.33 0.90"/><path d="M12 132.7000000000001 H98.5" stroke="#8a8a8a" stroke-width="1.0" stroke-dasharray="6.34 0.90 7.77 0.90 3.12 0.90 7.50 0.90 3.55 0.90 4.83 0.90 7.92 0.90 7.80 0.90 3.28 0.90 3.53 0.90 4.80 0.90 5.63 0.90 4.69 0.90 2.86 0.90 3.73 0.90"/><path d="M12 136.1000000000001 H98.5" stroke="#8a8a8a" stroke-width="1.0" stroke-dasharray="7.07 0.90 8.28 0.90 2.29 0.90 5.94 0.90 7.30 0.90 2.27 0.90 7.87 0.90 2.82 0.90 6.20 0.90 5.85 0.90 6.39 0.90 4.14 0.90 4.94 0.90 6.08 0.90"/><path d="M12 139.5000000000001 H98.5" stroke="#8a8a8a" stroke-width="1.0" stroke-dasharray="4.98 0.90 6.61 0.90 5.13 0.90 5.07 0.90 2.16 0.90 6.33 0.90 5.43 0.90 3.65 0.90 7.34 0.90 7.46 0.90 5.21 0.90 3.26 0.90 5.31 0.90 2.75 0.90 2.90 0.90"/><path d="M12 142.90000000000012 H58.43574774623428" stroke="#8a8a8a" stroke-width="1.0" stroke-dasharray="2.64 0.90 5.09 0.90 5.57 0.90 2.29 0.90 6.46 0.90 2.58 0.90 7.13 0.90 7.44 0.90 5.58 0.90"/><path d="M12 147.60000000000014 H98.5" stroke="#8a8a8a" stroke-width="1.0" stroke-dasharray="2.38 0.90 5.53 0.90 4.65 0.90 8.66 0.90 2.95 0.90 8.00 0.90 8.97 0.90 7.12 0.90 7.70 0.90 3.36 0.90 8.87 0.90 5.44 0.90 8.70 0.90"/><path d="M12 151.00000000000014 H81.5306612159757" stroke="#8a8a8a" stroke-width="1.0" stroke-dasharray="3.16 0.90 7.52 0.90 8.51 0.90 2.46 0.90 4.46 0.90 7.29 0.90 3.11 0.90 8.28 0.90 3.92 0.90 7.71 0.90 3.01 0.90 5.52 0.90"/><path d="M12 155.70000000000016 H98.5" stroke="#8a8a8a" stroke-width="1.0" stroke-dasharray="8.44 0.90 3.46 0.90 3.84 0.90 5.54 0.90 4.23 0.90 2.26 0.90 3.27 0.90 3.13 0.90 8.55 0.90 6.76 0.90 8.27 0.90 3.18 0.90 7.49 0.90 2.81 0.90 5.72 0.90"/><path d="M12 159.10000000000016 H98.5" stroke="#8a8a8a" stroke-width="1.0" stroke-dasharray="6.45 0.90 4.52 0.90 8.11 0.90 5.89 0.90 6.06 0.90 8.18 0.90 2.73 0.90 8.95 0.90 6.41 0.90 4.76 0.90 7.58 0.90 3.85 0.90 8.93 0.90"/><path d="M12 162.50000000000017 H65.41792635437287" stroke="#8a8a8a" stroke-width="1.0" stroke-dasharray="4.52 0.90 7.35 0.90 5.10 0.90 3.24 0.90 7.21 0.90 2.34 0.90 7.74 0.90 3.78 0.90 6.47 0.90"/><path d="M12 167.2000000000002 H41.76082796644008" stroke="#555" stroke-width="1.15" stroke-dasharray="7.52 0.90 7.98 0.90 5.88 0.90 4.01 0.90 4.20 0.90"/><path d="M43 167.2000000000002 H98.5" stroke="#8a8a8a" stroke-width="1.0" stroke-dasharray="3.05 0.90 6.31 0.90 5.03 0.90 5.59 0.90 8.27 0.90 2.92 0.90 3.59 0.90 6.57 0.90 2.16 0.90 2.02 0.90 4.48 0.90"/><path d="M12 170.6000000000002 H98.5" stroke="#8a8a8a" stroke-width="1.0" stroke-dasharray="2.74 0.90 4.50 0.90 3.57 0.90 6.09 0.90 6.12 0.90 3.43 0.90 6.37 0.90 5.32 0.90 2.94 0.90 8.56 0.90 3.71 0.90 3.05 0.90 2.67 0.90 6.47 0.90 8.10 0.90"/><path d="M12 174.0000000000002 H75.1610780832085" stroke="#8a8a8a" stroke-width="1.0" stroke-dasharray="4.81 0.90 3.85 0.90 2.08 0.90 6.51 0.90 5.94 0.90 4.45 0.90 6.52 0.90 5.11 0.90 8.56 0.90 7.13 0.90"/><path d="M12 178.70000000000022 H98.5" stroke="#8a8a8a" stroke-width="1.0" stroke-dasharray="3.74 0.90 8.32 0.90 2.31 0.90 5.72 0.90 4.84 0.90 3.66 0.90 2.41 0.90 7.45 0.90 2.09 0.90 5.86 0.90 8.59 0.90 3.00 0.90 3.40 0.90 6.26 0.90 5.55 0.90"/><path d="M12 182.10000000000022 H98.5" stroke="#8a8a8a" stroke-width="1.0" stroke-dasharray="6.49 0.90 7.69 0.90 3.22 0.90 4.17 0.90 4.10 0.90 2.34 0.90 8.23 0.90 7.48 0.90 7.01 0.90 2.04 0.90 7.91 0.90 7.22 0.90 5.26 0.90 7.19 0.90"/><path d="M12 185.50000000000023 H98.5" stroke="#8a8a8a" stroke-width="1.0" stroke-dasharray="5.17 0.90 3.58 0.90 2.74 0.90 3.63 0.90 2.27 0.90 4.35 0.90 7.25 0.90 6.87 0.90 7.92 0.90 6.98 0.90 3.86 0.90 5.88 0.90 5.05 0.90 7.52 0.90 5.66 0.90"/><path d="M12 188.90000000000023 H98.5" stroke="#8a8a8a" stroke-width="1.0" stroke-dasharray="3.86 0.90 6.49 0.90 8.76 0.90 3.52 0.90 8.16 0.90 2.11 0.90 3.82 0.90 3.65 0.90 7.21 0.90 8.61 0.90 7.22 0.90 4.29 0.90 8.16 0.90"/><path d="M12 192.30000000000024 H98.5" stroke="#8a8a8a" stroke-width="1.0" stroke-dasharray="4.30 0.90 3.67 0.90 8.35 0.90 6.41 0.90 6.85 0.90 6.66 0.90 8.85 0.90 5.29 0.90 7.88 0.90 6.88 0.90 8.00 0.90 5.06 0.90"/><path d="M12 195.70000000000024 H72.42395465019635" stroke="#8a8a8a" stroke-width="1.0" stroke-dasharray="5.99 0.90 4.15 0.90 3.48 0.90 6.36 0.90 2.54 0.90 8.38 0.90 3.01 0.90 2.19 0.90 2.75 0.90 8.50 0.90 4.41 0.90"/><path d="M12 200.40000000000026 H98.5" stroke="#8a8a8a" stroke-width="1.0" stroke-dasharray="2.99 0.90 2.20 0.90 2.29 0.90 6.85 0.90 6.44 0.90 6.88 0.90 7.16 0.90 2.46 0.90 6.13 0.90 4.54 0.90 7.72 0.90 7.74 0.90 8.24 0.90 2.46 0.90"/><path d="M12 203.80000000000027 H98.5" stroke="#8a8a8a" stroke-width="1.0" stroke-dasharray="8.07 0.90 8.40 0.90 8.61 0.90 2.75 0.90 3.44 0.90 2.78 0.90 2.24 0.90 7.93 0.90 7.68 0.90 6.44 0.90 7.78 0.90 6.42 0.90 4.01 0.90"/><path d="M12 207.20000000000027 H98.5" stroke="#8a8a8a" stroke-width="1.0" stroke-dasharray="2.70 0.90 2.69 0.90 7.30 0.90 3.43 0.90 4.23 0.90 4.97 0.90 2.15 0.90 3.80 0.90 3.98 0.90 7.01 0.90 4.58 0.90 4.25 0.90 8.75 0.90 5.53 0.90 7.96 0.90"/><path d="M12 210.60000000000028 H98.5" stroke="#8a8a8a" stroke-width="1.0" stroke-dasharray="6.33 0.90 2.22 0.90 4.89 0.90 5.06 0.90 7.41 0.90 4.43 0.90 6.93 0.90 5.77 0.90 3.52 0.90 8.04 0.90 2.64 0.90 7.74 0.90 3.19 0.90 2.01 0.90 3.41 0.90"/><path d="M12 214.00000000000028 H98.5" stroke="#8a8a8a" stroke-width="1.0" stroke-dasharray="7.34 0.90 8.85 0.90 2.03 0.90 5.44 0.90 5.44 0.90 7.58 0.90 3.29 0.90 5.46 0.90 4.43 0.90 7.82 0.90 3.82 0.90 8.61 0.90 3.99 0.90 3.50 0.90"/><path d="M12 217.4000000000003 H98.5" stroke="#8a8a8a" stroke-width="1.0" stroke-dasharray="6.90 0.90 5.49 0.90 2.77 0.90 6.46 0.90 2.57 0.90 7.52 0.90 6.88 0.90 7.51 0.90 6.40 0.90 4.49 0.90 4.81 0.90 4.76 0.90 8.23 0.90 2.60 0.90"/><path d="M12 220.8000000000003 H80.21795104519963" stroke="#8a8a8a" stroke-width="1.0" stroke-dasharray="2.18 0.90 3.44 0.90 3.84 0.90 8.31 0.90 5.51 0.90 4.66 0.90 8.19 0.90 3.64 0.90 5.23 0.90 5.72 0.90 7.28 0.90 7.27 0.90"/><path d="M12 225.5000000000003 H36.69449825963573" stroke="#555" stroke-width="1.15" stroke-dasharray="6.09 0.90 5.96 0.90 4.93 0.90 9.06 0.90"/><path d="M43 225.5000000000003 H98.5" stroke="#8a8a8a" stroke-width="1.0" stroke-dasharray="6.63 0.90 7.19 0.90 3.19 0.90 5.07 0.90 7.41 0.90 6.05 0.90 2.88 0.90 5.23 0.90 8.20 0.90"/><path d="M12 228.90000000000032 H98.5" stroke="#8a8a8a" stroke-width="1.0" stroke-dasharray="3.67 0.90 3.34 0.90 4.11 0.90 6.92 0.90 7.91 0.90 3.08 0.90 3.09 0.90 3.73 0.90 4.29 0.90 5.66 0.90 3.13 0.90 4.30 0.90 3.32 0.90 8.83 0.90 7.10 0.90 2.71 0.90"/><path d="M12 232.30000000000032 H98.5" stroke="#8a8a8a" stroke-width="1.0" stroke-dasharray="8.74 0.90 2.71 0.90 4.69 0.90 8.89 0.90 7.56 0.90 7.13 0.90 5.04 0.90 3.37 0.90 6.47 0.90 2.75 0.90 3.45 0.90 4.72 0.90 2.24 0.90 4.79 0.90 7.54 0.90"/><path d="M12 235.70000000000033 H70.94037713284166" stroke="#8a8a8a" stroke-width="1.0" stroke-dasharray="5.50 0.90 6.43 0.90 5.24 0.90 2.99 0.90 6.23 0.90 4.83 0.90 7.19 0.90 8.36 0.90 5.01 0.90"/><path d="M106 21 H156" stroke="#474747" stroke-width="2.3" stroke-dasharray="14.89 1.00 16.99 1.00 13.05 1.00 10.74 1.00"/><path d="M106 25.2 H131.83329386850653" stroke="#555" stroke-width="1.15" stroke-dasharray="9.28 0.90 8.64 0.90 8.20 0.90"/><path d="M137 25.2 H193" stroke="#8a8a8a" stroke-width="1.0" stroke-dasharray="7.97 0.90 6.76 0.90 6.49 0.90 5.18 0.90 4.19 0.90 6.40 0.90 2.69 0.90 4.94 0.90 7.48 0.90"/><path d="M106 28.599999999999998 H193" stroke="#8a8a8a" stroke-width="1.0" stroke-dasharray="6.99 0.90 6.41 0.90 3.75 0.90 4.97 0.90 5.19 0.90 6.35 0.90 4.87 0.90 6.73 0.90 8.51 0.90 3.28 0.90 6.58 0.90 7.45 0.90 4.72 0.90"/><path d="M106 31.999999999999996 H155.538851852022" stroke="#8a8a8a" stroke-width="1.0" stroke-dasharray="8.82 0.90 2.27 0.90 5.80 0.90 3.13 0.90 7.47 0.90 8.58 0.90 5.63 0.90 2.71 0.90"/><path d="M106 36.699999999999996 H129.61840744951195" stroke="#555" stroke-width="1.15" stroke-dasharray="7.25 0.90 8.30 0.90 7.07 0.90"/><path d="M137 36.699999999999996 H193" stroke="#8a8a8a" stroke-width="1.0" stroke-dasharray="6.47 0.90 7.80 0.90 5.65 0.90 4.87 0.90 8.64 0.90 3.47 0.90 6.79 0.90 4.75 0.90 7.34 0.90"/><path d="M106 40.099999999999994 H193" stroke="#8a8a8a" stroke-width="1.0" stroke-dasharray="2.86 0.90 8.89 0.90 4.49 0.90 2.40 0.90 3.92 0.90 4.80 0.90 2.09 0.90 4.93 0.90 4.94 0.90 6.89 0.90 4.46 0.90 3.86 0.90 3.57 0.90 7.19 0.90 8.58 0.90"/><path d="M106 43.49999999999999 H157.32060790796822" stroke="#8a8a8a" stroke-width="1.0" stroke-dasharray="3.53 0.90 7.61 0.90 4.74 0.90 3.48 0.90 2.91 0.90 7.44 0.90 7.67 0.90 6.44 0.90 5.28 0.90"/><path d="M110 48.19999999999999 H193" stroke="#8a8a8a" stroke-width="1.0" stroke-dasharray="5.93 0.90 3.58 0.90 8.75 0.90 4.47 0.90 6.47 0.90 7.73 0.90 7.71 0.90 5.28 0.90 4.06 0.90 5.84 0.90 2.88 0.90 7.84 0.90 4.48 0.90"/><path d="M106 51.59999999999999 H193" stroke="#8a8a8a" stroke-width="1.0" stroke-dasharray="7.95 0.90 3.87 0.90 4.63 0.90 3.77 0.90 4.98 0.90 3.30 0.90 2.02 0.90 7.05 0.90 3.97 0.90 3.71 0.90 4.11 0.90 5.36 0.90 5.00 0.90 6.46 0.90 6.61 0.90 4.54 0.90"/><path d="M106 54.999999999999986 H176.53954895702466" stroke="#8a8a8a" stroke-width="1.0" stroke-dasharray="7.98 0.90 2.40 0.90 7.80 0.90 8.34 0.90 7.49 0.90 2.98 0.90 7.82 0.90 6.43 0.90 2.10 0.90 2.08 0.90 8.66 0.90"/><path d="M110 59.69999999999998 H193" stroke="#8a8a8a" stroke-width="1.0" stroke-dasharray="6.59 0.90 3.75 0.90 2.71 0.90 3.00 0.90 3.64 0.90 7.43 0.90 4.43 0.90 3.07 0.90 8.33 0.90 7.54 0.90 3.18 0.90 8.24 0.90 6.26 0.90 7.47 0.90"/><path d="M106 63.09999999999998 H193" stroke="#8a8a8a" stroke-width="1.0" stroke-dasharray="6.68 0.90 8.26 0.90 7.52 0.90 7.87 0.90 3.38 0.90 6.85 0.90 5.72 0.90 7.19 0.90 5.07 0.90 8.18 0.90 5.89 0.90 3.85 0.90"/><path d="M106 66.49999999999999 H193" stroke="#8a8a8a" stroke-width="1.0" stroke-dasharray="3.64 0.90 2.98 0.90 5.45 0.90 2.41 0.90 5.27 0.90 3.01 0.90 5.44 0.90 5.49 0.90 5.78 0.90 8.04 0.90 2.05 0.90 7.89 0.90 5.28 0.90 5.94 0.90 6.66 0.90"/><path d="M106 69.89999999999999 H193" stroke="#8a8a8a" stroke-width="1.0" stroke-dasharray="7.88 0.90 4.62 0.90 4.93 0.90 8.72 0.90 2.53 0.90 6.46 0.90 6.45 0.90 2.20 0.90 6.27 0.90 6.78 0.90 8.52 0.90 4.31 0.90 8.87 0.90"/><path d="M106 73.3 H193" stroke="#8a8a8a" stroke-width="1.0" stroke-dasharray="5.57 0.90 5.39 0.90 8.28 0.90 2.24 0.90 7.03 0.90 6.38 0.90 4.37 0.90 8.03 0.90 4.56 0.90 5.32 0.90 5.68 0.90 7.39 0.90 3.48 0.90 5.05 0.90"/><path d="M106 76.7 H193" stroke="#8a8a8a" stroke-width="1.0" stroke-dasharray="4.96 0.90 5.88 0.90 7.79 0.90 4.05 0.90 7.79 0.90 4.83 0.90 5.53 0.90 3.90 0.90 5.54 0.90 8.82 0.90 6.58 0.90 7.54 0.90 4.32 0.90"/><path d="M106 80.10000000000001 H193" stroke="#8a8a8a" stroke-width="1.0" stroke-dasharray="4.22 0.90 4.09 0.90 6.11 0.90 6.44 0.90 7.49 0.90 2.28 0.90 7.06 0.90 8.20 0.90 5.82 0.90 2.35 0.90 4.10 0.90 2.04 0.90 3.33 0.90 8.45 0.90 6.26 0.90"/><path d="M106 83.50000000000001 H163.5860272938618" stroke="#8a8a8a" stroke-width="1.0" stroke-dasharray="7.52 0.90 8.37 0.90 6.28 0.90 6.32 0.90 6.39 0.90 6.87 0.90 6.17 0.90 6.77 0.90"/><path d="M106.5 93.70000000000002 L110.5 87.20000000000002 L114.5 93.70000000000002 Z" fill="#222"/><path d="M118 89.20000000000002 H193" stroke="#7d7d7d" stroke-width="1.0" stroke-dasharray="3.49 0.90 6.67 0.90 5.21 0.90 7.34 0.90 2.71 0.90 3.27 0.90 2.26 0.90 7.42 0.90 8.40 0.90 6.59 0.90 4.58 0.90 7.76 0.90"/><path d="M118 92.60000000000002 H193" stroke="#7d7d7d" stroke-width="1.0" stroke-dasharray="7.51 0.90 5.93 0.90 3.81 0.90 4.11 0.90 4.95 0.90 4.23 0.90 5.01 0.90 6.49 0.90 8.54 0.90 2.38 0.90 5.97 0.90 2.28 0.90 2.83 0.90"/><path d="M118 96.00000000000001 H193" stroke="#7d7d7d" stroke-width="1.0" stroke-dasharray="7.67 0.90 6.03 0.90 8.43 0.90 5.13 0.90 2.10 0.90 4.71 0.90 6.14 0.90 8.56 0.90 8.87 0.90 5.33 0.90 4.89 0.90"/><path d="M106 100.70000000000002 H122.53064795765184" stroke="#555" stroke-width="1.15" stroke-dasharray="7.87 0.90 5.27 0.90 4.91 0.90"/><path d="M137 100.70000000000002 H193" stroke="#8a8a8a" stroke-width="1.0" stroke-dasharray="2.11 0.90 2.03 0.90 6.79 0.90 2.85 0.90 8.76 0.90 2.62 0.90 8.09 0.90 2.90 0.90 2.12 0.90 7.04 0.90 3.70 0.90"/><path d="M106 104.10000000000002 H193" stroke="#8a8a8a" stroke-width="1.0" stroke-dasharray="7.13 0.90 3.31 0.90 2.35 0.90 7.42 0.90 6.99 0.90 7.99 0.90 7.11 0.90 2.59 0.90 6.40 0.90 6.96 0.90 5.22 0.90 8.53 0.90 3.78 0.90"/><path d="M106 107.50000000000003 H193" stroke="#8a8a8a" stroke-width="1.0" stroke-dasharray="8.75 0.90 7.02 0.90 2.08 0.90 2.10 0.90 6.55 0.90 7.72 0.90 2.56 0.90 4.18 0.90 7.11 0.90 3.16 0.90 8.03 0.90 5.40 0.90 2.42 0.90 4.57 0.90 6.02 0.90"/><path d="M106 110.90000000000003 H193" stroke="#8a8a8a" stroke-width="1.0" stroke-dasharray="5.07 0.90 6.74 0.90 3.01 0.90 7.58 0.90 4.54 0.90 6.51 0.90 6.41 0.90 4.93 0.90 4.70 0.90 7.50 0.90 8.61 0.90 7.49 0.90 5.97 0.90"/><path d="M106 114.30000000000004 H193" stroke="#8a8a8a" stroke-width="1.0" stroke-dasharray="4.05 0.90 2.42 0.90 8.82 0.90 6.92 0.90 7.79 0.90 4.32 0.90 6.24 0.90 8.84 0.90 7.82 0.90 6.21 0.90 4.16 0.90 5.00 0.90 8.22 0.90"/><path d="M106 117.70000000000005 H193" stroke="#8a8a8a" stroke-width="1.0" stroke-dasharray="4.64 0.90 6.79 0.90 6.21 0.90 8.27 0.90 7.65 0.90 3.98 0.90 2.01 0.90 3.84 0.90 4.96 0.90 6.11 0.90 7.71 0.90 8.21 0.90 2.30 0.90 7.83 0.90"/><path d="M106 121.10000000000005 H193" stroke="#8a8a8a" stroke-width="1.0" stroke-dasharray="7.68 0.90 8.07 0.90 6.00 0.90 3.92 0.90 7.96 0.90 7.65 0.90 6.79 0.90 8.40 0.90 4.43 0.90 2.60 0.90 5.88 0.90 7.58 0.90"/><path d="M106 124.50000000000006 H193" stroke="#8a8a8a" stroke-width="1.0" stroke-dasharray="3.40 0.90 7.25 0.90 8.52 0.90 3.64 0.90 6.25 0.90 6.74 0.90 5.26 0.90 3.45 0.90 3.78 0.90 7.26 0.90 7.54 0.90 5.22 0.90 2.61 0.90 7.65 0.90"/><path d="M106 127.90000000000006 H193" stroke="#8a8a8a" stroke-width="1.0" stroke-dasharray="7.41 0.90 3.63 0.90 6.06 0.90 8.28 0.90 8.20 0.90 5.65 0.90 5.34 0.90 6.13 0.90 3.32 0.90 3.35 0.90 3.26 0.90 6.91 0.90 4.54 0.90 5.95 0.90"/><path d="M106 131.30000000000007 H193" stroke="#8a8a8a" stroke-width="1.0" stroke-dasharray="4.82 0.90 5.62 0.90 3.04 0.90 2.31 0.90 8.98 0.90 4.62 0.90 2.74 0.90 6.43 0.90 7.51 0.90 3.09 0.90 6.18 0.90 4.41 0.90 5.64 0.90 2.14 0.90 2.24 0.90 8.93 0.90"/><path d="M106 134.70000000000007 H193" stroke="#8a8a8a" stroke-width="1.0" stroke-dasharray="8.06 0.90 5.40 0.90 5.97 0.90 3.83 0.90 7.45 0.90 4.98 0.90 8.63 0.90 7.37 0.90 7.73 0.90 8.74 0.90 3.78 0.90 2.27 0.90 3.41 0.90"/><path d="M106 138.10000000000008 H193" stroke="#8a8a8a" stroke-width="1.0" stroke-dasharray="3.27 0.90 2.59 0.90 2.36 0.90 5.90 0.90 8.09 0.90 5.21 0.90 8.63 0.90 8.37 0.90 2.45 0.90 6.19 0.90 4.78 0.90 2.84 0.90 8.72 0.90 3.80 0.90 5.95 0.90"/><path d="M106 141.50000000000009 H193" stroke="#8a8a8a" stroke-width="1.0" stroke-dasharray="6.48 0.90 8.69 0.90 6.69 0.90 4.75 0.90 5.14 0.90 3.12 0.90 8.76 0.90 8.94 0.90 3.55 0.90 2.27 0.90 3.79 0.90 4.46 0.90 8.32 0.90 8.33 0.90"/><path d="M106 144.9000000000001 H193" stroke="#8a8a8a" stroke-width="1.0" stroke-dasharray="7.86 0.90 2.33 0.90 7.50 0.90 6.97 0.90 6.53 0.90 8.90 0.90 2.39 0.90 3.01 0.90 7.28 0.90 8.58 0.90 6.74 0.90 4.09 0.90 6.14 0.90"/><path d="M106 148.3000000000001 H193" stroke="#8a8a8a" stroke-width="1.0" stroke-dasharray="7.31 0.90 2.74 0.90 4.27 0.90 3.80 0.90 2.87 0.90 5.37 0.90 3.18 0.90 3.67 0.90 3.00 0.90 6.74 0.90 2.09 0.90 7.02 0.90 3.37 0.90 2.25 0.90 8.49 0.90 3.54 0.90 8.54 0.90"/><path d="M106 151.7000000000001 H193" stroke="#8a8a8a" stroke-width="1.0" stroke-dasharray="8.07 0.90 8.22 0.90 2.98 0.90 5.13 0.90 2.68 0.90 8.50 0.90 7.90 0.90 6.40 0.90 5.17 0.90 4.38 0.90 7.76 0.90 5.34 0.90 6.40 0.90"/><path d="M106 155.1000000000001 H193" stroke="#8a8a8a" stroke-width="1.0" stroke-dasharray="3.00 0.90 3.55 0.90 2.40 0.90 7.00 0.90 5.87 0.90 3.01 0.90 8.10 0.90 3.86 0.90 4.88 0.90 3.09 0.90 3.90 0.90 7.88 0.90 4.34 0.90 3.17 0.90 5.44 0.90 4.23 0.90"/><path d="M106 158.5000000000001 H175.31659968074098" stroke="#8a8a8a" stroke-width="1.0" stroke-dasharray="2.80 0.90 8.85 0.90 2.40 0.90 8.27 0.90 6.68 0.90 3.48 0.90 5.34 0.90 4.00 0.90 3.80 0.90 3.41 0.90 4.55 0.90 8.94 0.90"/><path d="M106 163.20000000000013 H124" stroke="#505050" stroke-width="1.7" stroke-dasharray="14.98 1.00 14.33 1.00"/><path d="M106 166.90000000000012 H122.46347273776068" stroke="#555" stroke-width="1.15" stroke-dasharray="5.74 0.90 9.38 0.90"/><path d="M137 166.90000000000012 H193" stroke="#8a8a8a" stroke-width="1.0" stroke-dasharray="2.40 0.90 7.09 0.90 4.05 0.90 8.85 0.90 2.11 0.90 7.65 0.90 4.39 0.90 2.98 0.90 2.01 0.90 7.83 0.90"/><path d="M106 170.30000000000013 H193" stroke="#8a8a8a" stroke-width="1.0" stroke-dasharray="5.69 0.90 3.30 0.90 5.05 0.90 8.38 0.90 3.53 0.90 6.00 0.90 2.97 0.90 3.26 0.90 7.39 0.90 6.98 0.90 3.38 0.90 2.55 0.90 2.61 0.90 6.26 0.90 5.47 0.90 3.92 0.90"/><path d="M106 173.70000000000013 H193" stroke="#8a8a8a" stroke-width="1.0" stroke-dasharray="3.44 0.90 6.29 0.90 6.95 0.90 7.68 0.90 6.08 0.90 3.42 0.90 2.46 0.90 7.13 0.90 4.86 0.90 7.05 0.90 2.39 0.90 7.67 0.90 4.35 0.90 7.89 0.90"/><path d="M106 177.10000000000014 H193" stroke="#8a8a8a" stroke-width="1.0" stroke-dasharray="8.05 0.90 5.45 0.90 2.11 0.90 8.37 0.90 5.34 0.90 8.10 0.90 3.86 0.90 3.30 0.90 7.82 0.90 4.57 0.90 3.14 0.90 4.60 0.90 6.16 0.90 2.03 0.90 5.64 0.90"/><path d="M106 180.50000000000014 H193" stroke="#8a8a8a" stroke-width="1.0" stroke-dasharray="5.12 0.90 5.61 0.90 2.85 0.90 7.00 0.90 7.72 0.90 8.06 0.90 4.25 0.90 6.98 0.90 4.67 0.90 7.26 0.90 2.43 0.90 8.11 0.90 8.68 0.90"/><path d="M106 183.90000000000015 H155.77634921120182" stroke="#8a8a8a" stroke-width="1.0" stroke-dasharray="5.59 0.90 5.71 0.90 5.76 0.90 2.14 0.90 8.77 0.90 3.57 0.90 3.28 0.90 2.72 0.90 3.75 0.90 7.72 0.90"/><path d="M106 188.60000000000016 H121.45110330203002" stroke="#555" stroke-width="1.15" stroke-dasharray="4.58 0.90 8.19 0.90 5.17 0.90"/><path d="M137 188.60000000000016 H193" stroke="#8a8a8a" stroke-width="1.0" stroke-dasharray="2.12 0.90 6.20 0.90 6.04 0.90 5.66 0.90 6.92 0.90 2.72 0.90 8.09 0.90 7.02 0.90 2.32 0.90 2.86 0.90"/><path d="M106 192.00000000000017 H193" stroke="#8a8a8a" stroke-width="1.0" stroke-dasharray="5.46 0.90 5.51 0.90 3.96 0.90 2.85 0.90 4.84 0.90 2.96 0.90 6.14 0.90 8.03 0.90 3.03 0.90 6.01 0.90 7.23 0.90 3.15 0.90 7.78 0.90 8.56 0.90"/><path d="M106 195.40000000000018 H193" stroke="#8a8a8a" stroke-width="1.0" stroke-dasharray="4.72 0.90 4.94 0.90 7.88 0.90 5.68 0.90 4.77 0.90 8.59 0.90 7.44 0.90 4.37 0.90 3.68 0.90 4.35 0.90 5.05 0.90 8.87 0.90 7.63 0.90"/><path d="M106 198.80000000000018 H193" stroke="#8a8a8a" stroke-width="1.0" stroke-dasharray="8.39 0.90 7.71 0.90 7.93 0.90 2.37 0.90 5.62 0.90 8.71 0.90 8.54 0.90 3.74 0.90 4.95 0.90 6.43 0.90 4.55 0.90 5.72 0.90 2.48 0.90"/><path d="M106 202.2000000000002 H193" stroke="#8a8a8a" stroke-width="1.0" stroke-dasharray="5.03 0.90 5.53 0.90 2.15 0.90 2.98 0.90 8.79 0.90 7.44 0.90 8.56 0.90 6.43 0.90 7.66 0.90 8.19 0.90 8.19 0.90 2.24 0.90 6.49 0.90"/><path d="M106 205.6000000000002 H144.8171901685962" stroke="#8a8a8a" stroke-width="1.0" stroke-dasharray="6.75 0.90 3.91 0.90 5.80 0.90 8.47 0.90 6.35 0.90 3.75 0.90"/><path d="M106 210.3000000000002 H128.804575005211" stroke="#555" stroke-width="1.15" stroke-dasharray="6.60 0.90 9.71 0.90 5.73 0.90"/><path d="M137 210.3000000000002 H193" stroke="#8a8a8a" stroke-width="1.0" stroke-dasharray="4.14 0.90 6.53 0.90 2.84 0.90 6.16 0.90 8.69 0.90 5.60 0.90 3.88 0.90 5.26 0.90 5.74 0.90"/><path d="M106 213.70000000000022 H193" stroke="#8a8a8a" stroke-width="1.0" stroke-dasharray="3.04 0.90 2.87 0.90 2.92 0.90 4.06 0.90 4.85 0.90 4.02 0.90 3.70 0.90 2.61 0.90 5.82 0.90 7.88 0.90 6.27 0.90 5.99 0.90 6.55 0.90 3.41 0.90 6.97 0.90 5.23 0.90"/><path d="M106 217.10000000000022 H193" stroke="#8a8a8a" stroke-width="1.0" stroke-dasharray="5.84 0.90 6.29 0.90 5.28 0.90 4.17 0.90 3.70 0.90 3.55 0.90 5.59 0.90 4.68 0.90 6.10 0.90 2.08 0.90 4.47 0.90 8.03 0.90 3.67 0.90 5.90 0.90 5.44 0.90"/><path d="M106 220.50000000000023 H193" stroke="#8a8a8a" stroke-width="1.0" stroke-dasharray="3.99 0.90 8.91 0.90 4.07 0.90 7.40 0.90 3.11 0.90 2.47 0.90 8.10 0.90 5.08 0.90 2.43 0.90 4.72 0.90 5.08 0.90 7.15 0.90 2.76 0.90 3.58 0.90 8.72 0.90"/><path d="M106 223.90000000000023 H167.44378828510287" stroke="#8a8a8a" stroke-width="1.0" stroke-dasharray="3.08 0.90 4.36 0.90 4.47 0.90 6.73 0.90 6.31 0.90 7.95 0.90 7.75 0.90 5.62 0.90 7.17 0.90"/><path d="M106 228.60000000000025 H132.14918413632034" stroke="#555" stroke-width="1.15" stroke-dasharray="8.56 0.90 6.85 0.90 8.71 0.90"/><path d="M137 228.60000000000025 H193" stroke="#8a8a8a" stroke-width="1.0" stroke-dasharray="6.96 0.90 8.40 0.90 2.89 0.90 8.10 0.90 2.03 0.90 7.36 0.90 6.10 0.90 5.49 0.90 8.74 0.90"/><path d="M106 232.00000000000026 H193" stroke="#8a8a8a" stroke-width="1.0" stroke-dasharray="6.00 0.90 4.93 0.90 7.49 0.90 8.11 0.90 6.25 0.90 4.66 0.90 5.17 0.90 5.21 0.90 7.06 0.90 4.05 0.90 4.73 0.90 5.89 0.90 4.69 0.90 4.25 0.90"/><path d="M106 235.40000000000026 H193" stroke="#8a8a8a" stroke-width="1.0" stroke-dasharray="7.51 0.90 7.95 0.90 5.50 0.90 5.11 0.90 3.29 0.90 4.13 0.90 3.01 0.90 6.03 0.90 6.07 0.90 2.62 0.90 8.44 0.90 4.27 0.90 7.90 0.90 7.87 0.90"/><path d="M106 238.80000000000027 H193" stroke="#8a8a8a" stroke-width="1.0" stroke-dasharray="8.71 0.90 3.43 0.90 4.99 0.90 8.37 0.90 2.07 0.90 2.33 0.90 5.95 0.90 5.48 0.90 8.44 0.90 7.41 0.90 5.77 0.90 8.99 0.90 5.62 0.90"/><path d="M106 242.20000000000027 H193" stroke="#8a8a8a" stroke-width="1.0" stroke-dasharray="5.62 0.90 6.80 0.90 4.73 0.90 4.50 0.90 6.16 0.90 4.46 0.90 8.64 0.90 6.74 0.90 5.68 0.90 2.69 0.90 4.62 0.90 4.81 0.90 5.93 0.90 6.02 0.90"/></svg></div>
<div style="position:absolute;left:92px;top:785px;width:204px;height:262px;border-radius:5px;background:#fff;overflow:hidden"><svg width="100%" height="100%" viewBox="0 0 204 262" preserveAspectRatio="none" style="position:absolute;left:0;top:0"><path d="M12 13.4 H32" stroke="#999" stroke-width="0.7" stroke-dasharray="8.16 0.90 8.75 0.90 5.41 0.90"/><path d="M178 13.4 H186" stroke="#777" stroke-width="0.7" stroke-dasharray="5.08 0.90 6.37 0.90"/><path d="M12 16.2 H192.5" stroke="#333" stroke-width="1.3"/><path d="M56 19.8 H122" stroke="#444" stroke-width="1.6" stroke-dasharray="14.96 1.00 8.43 1.00 10.30 1.00 13.16 1.00 6.71 1.00 8.18 1.00"/><path d="M125 19.8 H150" stroke="#777" stroke-width="1.0" stroke-dasharray="8.85 0.90 7.78 0.90 5.59 0.90 2.77 0.90"/><rect x="184.8" y="16" width="7.7" height="7.7" fill="#111"/><path d="M186.5 22 L190.5 17.5" stroke="#fff" stroke-width="0.9"/><path d="M12 23.7 H192.5" stroke="#333" stroke-width="1.3"/><path d="M12 26.5 H192" stroke="#777" stroke-width="0.9" stroke-dasharray="8.26 0.90 6.83 0.90 7.74 0.90 8.93 0.90 8.22 0.90 4.95 0.90 3.09 0.90 4.03 0.90 5.58 0.90 5.53 0.90 3.32 0.90 3.28 0.90 6.41 0.90 6.22 0.90 4.47 0.90 8.96 0.90 6.46 0.90 2.30 0.90 4.88 0.90 7.51 0.90 4.15 0.90 6.83 0.90 2.03 0.90 4.13 0.90 7.90 0.90 6.10 0.90 6.68 0.90 3.38 0.90"/><path d="M12 30.2 H192" stroke="#777" stroke-width="0.9" stroke-dasharray="5.49 0.90 5.87 0.90 3.86 0.90 6.53 0.90 5.72 0.90 8.98 0.90 6.02 0.90 4.88 0.90 2.85 0.90 3.10 0.90 7.32 0.90 2.75 0.90 2.70 0.90 3.19 0.90 5.66 0.90 7.76 0.90 6.29 0.90 7.65 0.90 2.43 0.90 2.09 0.90 7.39 0.90 4.26 0.90 7.01 0.90 4.48 0.90 3.19 0.90 3.87 0.90 2.70 0.90 8.33 0.90 6.08 0.90 4.44 0.90 5.15 0.90"/><path d="M12 34.0 H140" stroke="#777" stroke-width="0.9" stroke-dasharray="4.70 0.90 2.38 0.90 8.23 0.90 6.08 0.90 8.72 0.90 5.08 0.90 6.34 0.90 3.75 0.90 2.31 0.90 8.52 0.90 7.98 0.90 4.20 0.90 8.29 0.90 7.71 0.90 4.13 0.90 6.22 0.90 8.72 0.90 5.47 0.90 8.65 0.90"/><path d="M12 39.6 H190" stroke="#777" stroke-width="0.9" stroke-dasharray="3.70 0.90 4.73 0.90 7.03 0.90 3.55 0.90 4.16 0.90 8.13 0.90 5.39 0.90 7.55 0.90 3.70 0.90 3.21 0.90 4.51 0.90 3.31 0.90 8.80 0.90 4.03 0.90 5.93 0.90 2.80 0.90 5.74 0.90 4.70 0.90 4.82 0.90 2.46 0.90 2.86 0.90 7.78 0.90 4.46 0.90 3.71 0.90 3.34 0.90 3.99 0.90 3.66 0.90 2.24 0.90 6.65 0.90 4.39 0.90 3.09 0.90 6.94 0.90"/><path d="M12 43.4 H100" stroke="#777" stroke-width="0.9" stroke-dasharray="2.65 0.90 3.89 0.90 7.85 0.90 2.89 0.90 5.10 0.90 7.85 0.90 7.63 0.90 3.11 0.90 4.47 0.90 7.06 0.90 4.64 0.90 8.71 0.90 3.46 0.90 8.66 0.90"/><path d="M16 48.8 H18" stroke="#555" stroke-width="0.9" stroke-dasharray="5.53 0.90"/><path d="M21 48.8 H32" stroke="#444" stroke-width="1.0" stroke-dasharray="6.36 0.90 7.72 0.90"/><path d="M33 48.8 H160" stroke="#888" stroke-width="0.8" stroke-dasharray="2.92 0.90 6.95 0.90 3.83 0.90 8.30 0.90 6.11 0.90 4.58 0.90 3.72 0.90 6.26 0.90 3.49 0.90 8.11 0.90 2.86 0.90 5.59 0.90 5.80 0.90 3.89 0.90 7.40 0.90 4.69 0.90 6.60 0.90 5.97 0.90 4.18 0.90 4.73 0.90 2.60 0.90"/><path d="M33 52.5 H160" stroke="#888" stroke-width="0.8" stroke-dasharray="3.24 0.90 7.96 0.90 4.25 0.90 6.64 0.90 2.76 0.90 5.93 0.90 4.53 0.90 5.50 0.90 4.08 0.90 2.46 0.90 4.18 0.90 3.58 0.90 2.88 0.90 7.02 0.90 3.98 0.90 4.82 0.90 8.36 0.90 7.42 0.90 8.18 0.90 8.03 0.90 2.93 0.90"/><path d="M33 56.2 H160" stroke="#888" stroke-width="0.8" stroke-dasharray="3.94 0.90 2.21 0.90 6.76 0.90 6.65 0.90 4.46 0.90 4.89 0.90 6.61 0.90 6.89 0.90 3.74 0.90 7.93 0.90 4.46 0.90 6.40 0.90 3.27 0.90 2.81 0.90 8.39 0.90 7.14 0.90 6.99 0.90 2.28 0.90 2.28 0.90 3.13 0.90 3.39 0.90 4.12 0.90"/><path d="M33 60.0 H100" stroke="#888" stroke-width="0.8" stroke-dasharray="4.67 0.90 2.27 0.90 4.18 0.90 6.47 0.90 3.26 0.90 7.88 0.90 5.99 0.90 7.02 0.90 3.78 0.90 5.04 0.90 6.79 0.90"/><path d="M164 59.5 H166" stroke="#444" stroke-width="0.9" stroke-dasharray="4.44 0.90"/><path d="M169 58.8 H171" stroke="#444" stroke-width="0.9" stroke-dasharray="2.01 0.90"/><path d="M169 60.3 H192.5" stroke="#444" stroke-width="0.9"/><path d="M16 65.9 H18" stroke="#555" stroke-width="0.9" stroke-dasharray="7.84 0.90"/><path d="M21 65.9 H32" stroke="#444" stroke-width="1.0" stroke-dasharray="9.66 0.90 6.72 0.90"/><path d="M33 65.9 H160" stroke="#888" stroke-width="0.8" stroke-dasharray="2.30 0.90 7.98 0.90 6.25 0.90 2.33 0.90 3.71 0.90 2.78 0.90 7.54 0.90 3.47 0.90 8.40 0.90 7.25 0.90 2.60 0.90 6.86 0.90 4.76 0.90 7.23 0.90 7.80 0.90 3.97 0.90 2.63 0.90 8.62 0.90 4.97 0.90 8.51 0.90"/><path d="M21 69.8 H60" stroke="#888" stroke-width="0.8" stroke-dasharray="6.84 0.90 7.17 0.90 7.81 0.90 6.40 0.90 5.17 0.90 2.38 0.90"/><path d="M24 74.6 H26" stroke="#555" stroke-width="0.9" stroke-dasharray="6.89 0.90"/><path d="M30 74.6 H160" stroke="#888" stroke-width="0.8" stroke-dasharray="5.00 0.90 5.58 0.90 8.50 0.90 2.89 0.90 7.33 0.90 2.31 0.90 6.92 0.90 7.64 0.90 3.83 0.90 5.82 0.90 8.79 0.90 6.46 0.90 5.81 0.90 3.75 0.90 2.42 0.90 4.50 0.90 4.88 0.90 3.41 0.90 4.17 0.90 2.96 0.90 6.95 0.90 6.69 0.90"/><path d="M30 78.3 H160" stroke="#888" stroke-width="0.8" stroke-dasharray="3.67 0.90 3.69 0.90 5.61 0.90 5.12 0.90 8.55 0.90 4.46 0.90 4.10 0.90 8.19 0.90 2.99 0.90 5.94 0.90 4.34 0.90 7.71 0.90 5.84 0.90 7.32 0.90 3.18 0.90 6.67 0.90 6.19 0.90 5.23 0.90 7.36 0.90 7.82 0.90"/><path d="M30 82.0 H160" stroke="#888" stroke-width="0.8" stroke-dasharray="2.80 0.90 4.03 0.90 4.52 0.90 3.45 0.90 2.42 0.90 3.97 0.90 3.38 0.90 6.91 0.90 5.14 0.90 2.79 0.90 4.27 0.90 5.28 0.90 4.54 0.90 3.18 0.90 2.50 0.90 2.08 0.90 8.94 0.90 7.25 0.90 2.59 0.90 7.02 0.90 8.86 0.90 5.95 0.90 2.76 0.90 5.42 0.90"/><path d="M30 85.69999999999999 H110" stroke="#888" stroke-width="0.8" stroke-dasharray="5.04 0.90 3.33 0.90 5.80 0.90 2.06 0.90 8.44 0.90 6.51 0.90 6.39 0.90 8.55 0.90 6.57 0.90 3.76 0.90 3.72 0.90 2.97 0.90 2.19 0.90 7.42 0.90"/><path d="M24 92.6 H26" stroke="#555" stroke-width="0.9" stroke-dasharray="7.88 0.90"/><path d="M30 92.6 H160" stroke="#888" stroke-width="0.8" stroke-dasharray="4.07 0.90 3.30 0.90 6.47 0.90 7.92 0.90 8.49 0.90 3.18 0.90 7.49 0.90 7.81 0.90 7.20 0.90 4.29 0.90 3.29 0.90 7.78 0.90 4.24 0.90 4.58 0.90 5.86 0.90 4.58 0.90 7.82 0.90 3.68 0.90 2.29 0.90 5.97 0.90 6.40 0.90"/><path d="M30 96.3 H160" stroke="#888" stroke-width="0.8" stroke-dasharray="7.74 0.90 6.94 0.90 8.34 0.90 8.61 0.90 5.46 0.90 5.50 0.90 3.10 0.90 4.10 0.90 6.07 0.90 2.56 0.90 6.82 0.90 3.15 0.90 5.10 0.90 8.79 0.90 2.63 0.90 2.28 0.90 5.08 0.90 3.34 0.90 7.06 0.90 2.02 0.90 7.89 0.90"/><path d="M30 100.0 H160" stroke="#888" stroke-width="0.8" stroke-dasharray="7.99 0.90 7.51 0.90 4.98 0.90 3.98 0.90 6.63 0.90 5.60 0.90 4.95 0.90 4.37 0.90 5.07 0.90 6.66 0.90 7.78 0.90 8.33 0.90 3.15 0.90 4.07 0.90 5.10 0.90 5.94 0.90 4.44 0.90 3.37 0.90 2.60 0.90 4.27 0.90 5.22 0.90"/><path d="M30 103.69999999999999 H110" stroke="#888" stroke-width="0.8" stroke-dasharray="8.80 0.90 8.36 0.90 8.06 0.90 8.82 0.90 8.73 0.90 6.34 0.90 7.68 0.90 2.42 0.90 6.74 0.90 6.26 0.90"/><path d="M163 86.2 H167" stroke="#444" stroke-width="0.9" stroke-dasharray="4.08 0.90"/><path d="M169 85.7 H171" stroke="#444" stroke-width="0.9" stroke-dasharray="6.00 0.90"/><path d="M169 87.2 H192.5" stroke="#444" stroke-width="0.9"/><path d="M163 104.3 H167" stroke="#444" stroke-width="0.9" stroke-dasharray="8.67 0.90"/><path d="M169 103.8 H171" stroke="#444" stroke-width="0.9" stroke-dasharray="5.37 0.90"/><path d="M169 105.3 H192.5" stroke="#444" stroke-width="0.9"/><path d="M16 109.2 H18" stroke="#555" stroke-width="0.9" stroke-dasharray="6.53 0.90"/><path d="M30 109.2 H100" stroke="#888" stroke-width="0.8" stroke-dasharray="4.10 0.90 4.40 0.90 8.20 0.90 2.19 0.90 3.32 0.90 6.75 0.90 5.13 0.90 2.60 0.90 6.62 0.90 4.60 0.90 6.07 0.90 4.91 0.90 5.71 0.90"/><path d="M169 110 H192.5" stroke="#444" stroke-width="0.9"/></svg></div>
<div style="position:absolute;left:334px;top:50px;width:910px;height:860px;border-radius:10px 0 0 0;background:#333334"></div>
<div style="position:absolute;left:334px;top:50px;width:910px;height:56px;box-sizing:border-box;border-radius:10px 0 0 0;background:#2e2e2e;border-top:1px solid #363636;border-left:1px solid #363636"></div>
<div style="position:absolute;left:334px;top:105px;width:910px;height:5px;background:#2a2a2a"></div>
<div style="position:absolute;left:339px;top:55px;width:93px;height:48px;border:1px solid #3d3d3d;border-radius:10px"></div>
<div style="position:absolute;left:439px;top:55px;width:665px;height:47.5px;border:1px solid #3d3d3d;border-radius:10px"></div>
<div style="position:absolute;left:1112px;top:55px;width:117px;height:47.5px;border:1px solid #3d3d3d;border-radius:10px"></div>
<div style="position:absolute;left:334px;top:110px;width:876px;height:800px;background:#ffffff"></div>
<svg style="position:absolute;left:353px;top:66px;width:26px;height:27px;overflow:visible" viewBox="0 0 26 27" ><path d="M2 11.2 H23.9 V21.3 Q23.9 24.8 20.4 24.8 H5.5 Q2 24.8 2 21.3 Z" fill="none" stroke="#f0f0f0" stroke-width="1.5" stroke-linejoin="round"/><rect x="8.3" y="14.1" width="9.4" height="3.6" rx="1.8" fill="none" stroke="#f0f0f0" stroke-width="1.4"/><path d="M7.30 2.00 L9.00 5.25 L12.63 5.87 L10.06 8.50 L10.59 12.13 L7.30 10.50 L4.01 12.13 L4.54 8.50 L1.97 5.87 L5.60 5.25 Z" fill="none" stroke="#f0f0f0" stroke-width="1.4" stroke-linejoin="round"/><circle cx="14.8" cy="3.4" r="2.2" fill="none" stroke="#f0f0f0" stroke-width="1.3"/><path d="M16.3 11 L19.5 6.2 L22.7 11" fill="none" stroke="#f0f0f0" stroke-width="1.4" stroke-linejoin="round"/></svg>
<div style="position:absolute;left:386px;top:73.69px;font-size:13.6px;line-height:15.64px;height:15.64px;color:#f4f4f4;font-weight:bold;white-space:nowrap;font-family:'Liberation Sans', sans-serif;">Tools</div>
<div style="position:absolute;left:444px;top:60px;width:39.5px;height:40px;border-radius:7px;background:#7276f6"></div>
<svg style="position:absolute;left:455px;top:69px;width:20px;height:23px;overflow:visible" viewBox="0 0 20 23" ><path d="M1.5 1.5 L18.5 9.8 L10.6 12.2 L7 21.5 Z" fill="none" stroke="#fff" stroke-width="1.5" stroke-linejoin="round"/></svg>
<svg style="position:absolute;left:487.5px;top:78.0px;width:9.5px;height:5px;overflow:visible" viewBox="0 0 9.5 5" ><path d="M0.7 0.7 L4.75 4.3 L8.8 0.7" fill="none" stroke="#d8d8d8" stroke-width="1.5" stroke-linecap="round" stroke-linejoin="round"/></svg>
<div style="position:absolute;left:511px;top:73px;width:1px;height:15px;background:#4a4a4a"></div>
<svg style="position:absolute;left:530px;top:68px;width:24px;height:24px;overflow:visible" viewBox="0 0 24 24" ><rect x="1.75" y="1.95" width="21.3" height="21" rx="3.8" fill="none" stroke="#f0f0f0" stroke-width="1.5"/><path d="M6 4.6 V19.3 M18 4.6 V19.3 M6 11.4 H18 M4.2 4.6 H7.8 M16.2 4.6 H19.8 M4.2 19.3 H7.8 M16.2 19.3 H19.8" stroke="#f0f0f0" stroke-width="1.4"/></svg>
<svg style="position:absolute;left:566px;top:77.5px;width:9.5px;height:5px;overflow:visible" viewBox="0 0 9.5 5" ><path d="M0.7 0.7 L4.75 4.3 L8.8 0.7" fill="none" stroke="#d8d8d8" stroke-width="1.5" stroke-linecap="round" stroke-linejoin="round"/></svg>
<svg style="position:absolute;left:596px;top:69px;width:27px;height:22px;overflow:visible" viewBox="0 0 27 22" ><path d="M1.2 8.3 V4 Q1.2 1.5 3.7 1.5 H22.9 Q25.4 1.5 25.4 4 V8.3 M13.3 1.5 V20.6 M7.6 20.6 H19" fill="none" stroke="#f0f0f0" stroke-width="1.5"/></svg>
<svg style="position:absolute;left:634px;top:77.5px;width:9.5px;height:5px;overflow:visible" viewBox="0 0 9.5 5" ><path d="M0.7 0.7 L4.75 4.3 L8.8 0.7" fill="none" stroke="#d8d8d8" stroke-width="1.5" stroke-linecap="round" stroke-linejoin="round"/></svg>
<svg style="position:absolute;left:663px;top:68px;width:26px;height:24px;overflow:visible" viewBox="0 0 26 24" ><path d="M12.9 22.8 A11 11 0 1 1 21.7 18.6 L24.6 22.8 Z" fill="none" stroke="#f0f0f0" stroke-width="1.5" stroke-linejoin="round"/><path d="M9 8.8 H17.8 M9 14 H14.9" stroke="#f0f0f0" stroke-width="1.6" stroke-linecap="round"/></svg>
<svg style="position:absolute;left:716px;top:66px;width:23px;height:27px;overflow:visible" viewBox="0 0 23 27" ><path d="M1.8 25 L3.2 16 L13 3 Q14.8 0.9 17 2.6 L20.4 5.2 Q22.5 7 20.8 9.2 L11 22 Z" fill="none" stroke="#f0f0f0" stroke-width="1.5" stroke-linejoin="round"/><path d="M3.2 16 Q5 14 7 16 Q8.5 17.5 11 17 Q12.6 18.8 11 22" fill="none" stroke="#f0f0f0" stroke-width="1.4"/><path d="M2.3 21.5 L5.5 23.6" stroke="#f0f0f0" stroke-width="1.3"/></svg>
<div style="position:absolute;left:767px;top:70px;width:17px;height:17px;border:1.6px solid #f0f0f0"></div>
<svg style="position:absolute;left:801.5px;top:77.5px;width:9.5px;height:5px;overflow:visible" viewBox="0 0 9.5 5" ><path d="M0.7 0.7 L4.75 4.3 L8.8 0.7" fill="none" stroke="#d8d8d8" stroke-width="1.5" stroke-linecap="round" stroke-linejoin="round"/></svg>
<svg style="position:absolute;left:831px;top:66px;width:27px;height:26px;overflow:visible" viewBox="0 0 27 26" ><path d="M1.5 1 V5.5 M25.5 1 V5.5 M1.5 3.2 H25.5" stroke="#f0f0f0" stroke-width="1.5"/><rect x="1.5" y="10" width="24" height="14.5" rx="3" fill="none" stroke="#f0f0f0" stroke-width="1.5"/><path d="M1.5 18 H25.5 M5.5 10 V13.5 M9.5 10 V13.5 M13.5 10 V14.5 M17.5 10 V13.5 M21.5 10 V13.5" stroke="#f0f0f0" stroke-width="1.3"/></svg>
<svg style="position:absolute;left:869px;top:77.5px;width:9.5px;height:5px;overflow:visible" viewBox="0 0 9.5 5" ><path d="M0.7 0.7 L4.75 4.3 L8.8 0.7" fill="none" stroke="#d8d8d8" stroke-width="1.5" stroke-linecap="round" stroke-linejoin="round"/></svg>
<svg style="position:absolute;left:902px;top:68px;width:22px;height:24px;overflow:visible" viewBox="-11 -12 22 24" ><g transform="rotate(42)"><path d="M0 -5.2 V7.3 A1.9 1.9 0 0 1 -3.8 7.3 V-9 A3.8 3.8 0 0 1 3.8 -9 V9.3 A3.8 3.8 0 0 1 -3.8 9.3 V7" fill="none" stroke="#f0f0f0" stroke-width="1.5" stroke-linecap="round"/></g></svg>
<svg style="position:absolute;left:950px;top:68px;width:24px;height:24px;overflow:visible" viewBox="0 0 24 24" ><path d="M23 12.5 V6 Q23 0.8 17.8 0.8 H6.1 Q0.9 0.8 0.9 6 V17.9 Q0.9 23.1 6.1 23.1 H12.5 Q22.4 22.4 23 12.5 Z" fill="none" stroke="#f0f0f0" stroke-width="1.5" stroke-linejoin="round"/><path d="M22.8 12.7 Q15.8 12.6 14.4 17.6 Q13.7 21 12.5 23.1" fill="none" stroke="#f0f0f0" stroke-width="1.4"/><circle cx="8.2" cy="8.3" r="1.15" fill="#f0f0f0"/><circle cx="15.6" cy="8.3" r="1.15" fill="#f0f0f0"/><path d="M7.3 13.4 Q7.6 16.9 11.6 17.6" fill="none" stroke="#f0f0f0" stroke-width="1.4" stroke-linecap="round"/></svg>
<svg style="position:absolute;left:1000px;top:67px;width:24px;height:25px;overflow:visible" viewBox="0 0 24 25" ><circle cx="12.1" cy="5.9" r="5.1" fill="none" stroke="#f0f0f0" stroke-width="1.5"/><path d="M10.4 11 V16 M13.8 11 V16" stroke="#f0f0f0" stroke-width="1.3"/><rect x="2" y="16.1" width="20.2" height="5.2" rx="2.6" fill="none" stroke="#f0f0f0" stroke-width="1.5"/><path d="M3.5 23.6 H20.5" stroke="#f0f0f0" stroke-width="1.5"/></svg>
<svg style="position:absolute;left:1046px;top:66px;width:33px;height:27px;overflow:visible" viewBox="0 0 33 27" ><path d="M1.5 12 L5.6 16.3 M5.6 12 L1.5 16.3" stroke="#f0f0f0" stroke-width="1.3"/><path d="M1 19.7 H32" stroke="#f0f0f0" stroke-width="1.4"/><path d="M11.5 25.6 Q8.3 20 11.8 11 Q15.3 2 18.4 2.1 Q21.2 2.6 19.6 8 Q17 15.5 11.5 25.6 Z" fill="none" stroke="#f0f0f0" stroke-width="1.3" stroke-linejoin="round"/><path d="M8.6 15.4 Q11.5 14.8 14.2 13.4 Q16.2 12.4 16.4 14.6 Q17.6 12.9 19 12.5 Q19.8 14.6 21 14.5 Q22.8 12 24 12.7 Q25 14.6 27 13.6 L29.6 12.2" fill="none" stroke="#f0f0f0" stroke-width="1.3" stroke-linecap="round" stroke-linejoin="round"/></svg>
<div style="position:absolute;left:1092px;top:73px;width:1px;height:15px;background:#4a4a4a"></div>
<svg style="position:absolute;left:1130px;top:68px;width:22px;height:24px;overflow:visible" viewBox="0 0 22 24" ><path d="M3.6 1.2 H16.8 L20.8 6 V19.8 Q20.8 22.8 18 22.8 H4 Q1.2 22.8 1.2 19.8 V3.8 Q1.2 1.2 3.6 1.2 Z" fill="none" stroke="#6c6c6c" stroke-width="1.25" stroke-linejoin="round"/><path d="M6 1.2 V3.8 Q6 5.8 8 5.8 H13.5 Q15.5 5.8 15.5 3.8 V1.2" fill="none" stroke="#6c6c6c" stroke-width="1.25"/><circle cx="10.8" cy="14.4" r="3.1" fill="none" stroke="#6c6c6c" stroke-width="1.25"/></svg>
<svg style="position:absolute;left:1165px;top:77.5px;width:9.5px;height:5px;overflow:visible" viewBox="0 0 9.5 5" ><path d="M0.7 0.7 L4.75 4.3 L8.8 0.7" fill="none" stroke="#e0e0e0" stroke-width="1.5" stroke-linecap="round" stroke-linejoin="round"/></svg>
<div style="position:absolute;left:1189px;top:64.5px;width:29px;height:29px;border-radius:50%;background:linear-gradient(175deg,#5d5ff0 0%,#4a7cf2 35%,#3a95ee 65%,#26b8d6 100%)"></div>
<svg style="position:absolute;left:1189px;top:65px;width:29px;height:29px;overflow:visible" viewBox="0 0 29 29" ><g fill="none" stroke="#e6f7ff" stroke-width="1.25" stroke-linecap="round"><path d="M10.5 7.7 Q14.5 3.6 18.5 7 Q20.8 9.8 20.4 17"/><path d="M6.4 18.7 Q3.4 14 7.7 10.3 Q10.8 8.3 16.6 9"/><path d="M8.6 13.2 Q8.9 19.5 11.5 22.5 Q14.5 25.6 18.7 22.1"/><path d="M22.1 11.1 Q25.6 15.2 20.4 19.6 Q17 21.2 12 20.4"/></g><path d="M14.5 12.3 Q14.9 14.5 17.1 14.9 Q14.9 15.3 14.5 17.5 Q14.1 15.3 11.9 14.9 Q14.1 14.5 14.5 12.3 Z" fill="#fff"/></svg>
<div style="position:absolute;left:0;top:0;width:1236px;height:896px;clip-path:inset(110px 26px 0 334px)">
<div style="position:absolute;left:1019.20px;top:169.4px;width:1.6px;height:80.6px;background:#111111"></div>
<div style="position:absolute;left:1020px;top:189.20px;width:132.29999999999995px;height:1.2px;background:#333"></div>
<div style="position:absolute;left:1032px;top:173.41px;font-size:11.7px;line-height:13.45px;height:13.45px;color:#111111;font-weight:normal;white-space:nowrap;font-family:'Liberation Sans', sans-serif;">OMB No. 1545-0074</div>
<div style="position:absolute;right:227.39999999999998px;top:196.17px;font-size:12.3px;line-height:14.14px;height:14.14px;color:#111111;font-weight:bold;white-space:nowrap;font-family:'Liberation Sans', sans-serif;">Complete Form W-4 so that your employer can withhold the correct federal income tax from your pay.</div>
<div style="position:absolute;left:1043px;top:199px;font-size:33.4px;line-height:38px;font-weight:bold;letter-spacing:0.4px;color:#000;font-family:'Liberation Sans',sans-serif;white-space:nowrap;transform:scaleX(1.12);transform-origin:0 0"><span style="color:#fff;-webkit-text-stroke:1.1px #333">20</span>24</div>
<div style="position:absolute;left:900px;top:248.90px;width:252.29999999999995px;height:2.2px;background:#111111"></div>
<div style="position:absolute;left:982.60px;top:250px;width:1.6px;height:120px;background:#111111"></div>
<div style="position:absolute;left:990.6px;top:251.11px;font-size:11.7px;line-height:13.45px;height:13.45px;color:#111111;font-weight:bold;white-space:nowrap;font-family:'Liberation Sans', sans-serif;">(b)</div>
<div style="position:absolute;left:1014.5px;top:251.11px;font-size:11.7px;line-height:13.45px;height:13.45px;color:#111111;font-weight:bold;white-space:nowrap;font-family:'Liberation Sans', sans-serif;">Social security number</div>
<div style="position:absolute;left:900px;top:266.5px;width:82.5px;height:22.30000000000001px;background:#dde3fc;"></div>
<div style="position:absolute;left:984.2px;top:266.5px;width:166.79999999999995px;height:22.30000000000001px;background:#dde3fc;"></div>
<div style="position:absolute;left:900px;top:288.55px;width:252.29999999999995px;height:1.5px;background:#222"></div>
<div style="position:absolute;left:900px;top:307px;width:82.5px;height:21.600000000000023px;background:#dde3fc;"></div>
<div style="position:absolute;left:900px;top:329.35px;width:83px;height:1.3px;background:#333"></div>
<div style="position:absolute;left:900px;top:347px;width:82.5px;height:22.30000000000001px;background:#dde3fc;"></div>
<div style="position:absolute;left:900px;top:369.40px;width:252.29999999999995px;height:1.6px;background:#222"></div>
<div style="position:absolute;left:990.6px;top:292.11px;font-size:11.7px;line-height:13.45px;height:13.45px;color:#111111;font-weight:normal;white-space:nowrap;font-family:'Liberation Sans', sans-serif;"><b>Does your name match the</b></div>
<div style="position:absolute;left:990.6px;top:304.71px;font-size:11.7px;line-height:13.45px;height:13.45px;color:#111111;font-weight:normal;white-space:nowrap;font-family:'Liberation Sans', sans-serif;"><b>name on your social security</b></div>
<div style="position:absolute;left:990.6px;top:317.31px;font-size:11.7px;line-height:13.45px;height:13.45px;color:#111111;font-weight:normal;white-space:nowrap;font-family:'Liberation Sans', sans-serif;"><b>card?</b> If not, to ensure you get</div>
<div style="position:absolute;left:990.6px;top:329.81px;font-size:11.7px;line-height:13.45px;height:13.45px;color:#111111;font-weight:normal;white-space:nowrap;font-family:'Liberation Sans', sans-serif;">credit for your earnings,</div>
<div style="position:absolute;left:990.6px;top:342.41px;font-size:11.7px;line-height:13.45px;height:13.45px;color:#111111;font-weight:normal;white-space:nowrap;font-family:'Liberation Sans', sans-serif;">contact SSA at 800-772-1213</div>
<div style="position:absolute;left:990.6px;top:355.01px;font-size:11.7px;line-height:13.45px;height:13.45px;color:#111111;font-weight:normal;white-space:nowrap;font-family:'Liberation Sans', sans-serif;">or go to <i>www.ssa.gov</i>.</div>
<div style="position:absolute;right:83.70000000000005px;top:413.11px;font-size:11.7px;line-height:13.45px;height:13.45px;color:#111111;font-weight:normal;white-space:nowrap;font-family:'Liberation Sans', sans-serif;">Head of household (Check only if you’re unmarried and pay more than half the costs of keeping up a home for yourself and a qualifying individual.)</div>
<div style="position:absolute;left:900px;top:429.10px;width:252.29999999999995px;height:2.2px;background:#111111"></div>
<div style="position:absolute;right:90.5px;top:442.23px;font-size:15.1px;line-height:17.36px;height:17.36px;color:#111111;font-weight:normal;white-space:nowrap;font-family:'Liberation Sans', sans-serif;">Complete Steps 2–4 ONLY if they apply to you; otherwise, skip to Step 5. See page 2 for more information on each step, who can</div>
<div style="position:absolute;right:113px;top:496.93px;font-size:15.1px;line-height:17.36px;height:17.36px;color:#111111;font-weight:normal;white-space:nowrap;font-family:'Liberation Sans', sans-serif;">Complete this step if you (1) hold more than one job at a time, or (2) are married filing jointly and your spouse</div>
<div style="position:absolute;right:194px;top:514.93px;font-size:15.1px;line-height:17.36px;height:17.36px;color:#111111;font-weight:normal;white-space:nowrap;font-family:'Liberation Sans', sans-serif;">also works. The correct amount of withholding depends on income earned from all of these jobs.</div>
<div style="position:absolute;right:97.29999999999995px;top:561.93px;font-size:15.1px;line-height:17.36px;height:17.36px;color:#111111;font-weight:normal;white-space:nowrap;font-family:'Liberation Sans', sans-serif;">(a) Use the estimator at www.irs.gov/W4App for most accurate withholding for this step (and Steps 3–4). If you</div>
<div style="position:absolute;right:241.29999999999995px;top:602.93px;font-size:15.1px;line-height:17.36px;height:17.36px;color:#111111;font-weight:normal;white-space:nowrap;font-family:'Liberation Sans', sans-serif;">(b) Use the Multiple Jobs Worksheet on page 3 and enter the result in Step 4(c) below; <b>or</b></div>
<div style="position:absolute;right:116.70000000000005px;top:625.83px;font-size:15.1px;line-height:17.36px;height:17.36px;color:#111111;font-weight:normal;white-space:nowrap;font-family:'Liberation Sans', sans-serif;">(c) If there are only two jobs total, you may check this box. Do the same on Form W-4 for the other job. This</div>
<div style="position:absolute;right:112.79999999999995px;top:643.33px;font-size:15.1px;line-height:17.36px;height:17.36px;color:#111111;font-weight:normal;white-space:nowrap;font-family:'Liberation Sans', sans-serif;">option is generally more accurate than (b) if pay at the lower paying job is more than half of the pay at the</div>
<div style="position:absolute;right:94.70000000000005px;top:701.53px;font-size:15.1px;line-height:17.36px;height:17.36px;color:#111111;font-weight:normal;white-space:nowrap;font-family:'Liberation Sans', sans-serif;">be most accurate if you complete Steps 3–4(b) on the Form W-4 for the highest paying job and leave it blank for the other jobs. (Your withholding will</div>
<div style="position:absolute;left:900px;top:489.00px;width:252.29999999999995px;height:1.6px;background:#333"></div>
<div style="position:absolute;left:952px;top:674px;width:2px;height:2px;background:#333"></div>
<div style="position:absolute;left:972px;top:674px;width:2px;height:2px;background:#333"></div>
<div style="position:absolute;left:992px;top:674px;width:2px;height:2px;background:#333"></div>
<div style="position:absolute;left:1012px;top:674px;width:2px;height:2px;background:#333"></div>
<div style="position:absolute;left:1032px;top:674px;width:2px;height:2px;background:#333"></div>
<div style="position:absolute;left:1052px;top:674px;width:2px;height:2px;background:#333"></div>
<div style="position:absolute;left:1072px;top:674px;width:2px;height:2px;background:#333"></div>
<div style="position:absolute;left:1092px;top:674px;width:2px;height:2px;background:#333"></div>
<div style="position:absolute;left:1112px;top:674px;width:2px;height:2px;background:#333"></div>
<div style="position:absolute;left:1131.4px;top:663.8px;width:14.099999999999909px;height:13.600000000000023px;background:#dde3fc;box-sizing:border-box;border:1.3px solid #555"></div>
<div style="position:absolute;left:334px;top:748.40px;width:818.3px;height:1.6px;background:#333"></div>
<div style="position:absolute;left:395.3px;top:757.13px;font-size:15.1px;line-height:17.36px;height:17.36px;color:#111111;font-weight:normal;white-space:nowrap;font-family:'Liberation Sans', sans-serif;">If your total income will be $200,000 or less ($400,000 or less if married filing jointly):</div>
<div style="position:absolute;left:419.2px;top:781.13px;font-size:15.1px;line-height:17.36px;height:17.36px;color:#111111;font-weight:normal;white-space:nowrap;font-family:'Liberation Sans', sans-serif;">Multiply the number of qualifying children under age 17 by $2,000</div>
<div style="position:absolute;left:419.2px;top:811.03px;font-size:15.1px;line-height:17.36px;height:17.36px;color:#111111;font-weight:normal;white-space:nowrap;font-family:'Liberation Sans', sans-serif;">Multiply the number of other dependents by $500</div>
<div style="position:absolute;left:773px;top:824px;width:2px;height:2px;background:#333"></div>
<div style="position:absolute;left:793px;top:824px;width:2px;height:2px;background:#333"></div>
<div style="position:absolute;left:813px;top:824px;width:2px;height:2px;background:#333"></div>
<div style="position:absolute;left:833px;top:824px;width:2px;height:2px;background:#333"></div>
<div style="position:absolute;left:853px;top:824px;width:2px;height:2px;background:#333"></div>
<div style="position:absolute;left:865.5px;top:780.00px;font-size:16.8px;line-height:19.32px;height:19.32px;color:#111111;font-weight:normal;white-space:nowrap;font-family:'Liberation Sans', sans-serif;">$</div>
<div style="position:absolute;left:865.5px;top:809.90px;font-size:16.8px;line-height:19.32px;height:19.32px;color:#111111;font-weight:normal;white-space:nowrap;font-family:'Liberation Sans', sans-serif;">$</div>
<div style="position:absolute;left:875.6px;top:779px;width:107.19999999999993px;height:19.399999999999977px;background:#dde3fc;"></div>
<div style="position:absolute;left:875.6px;top:810.4px;width:107.19999999999993px;height:17.899999999999977px;background:#dde3fc;"></div>
<div style="position:absolute;left:863px;top:799.25px;width:120px;height:1.5px;background:#555"></div>
<div style="position:absolute;left:863px;top:828.45px;width:120px;height:1.5px;background:#555"></div>
<div style="position:absolute;left:995.65px;top:749px;width:1.3px;height:147px;background:#222"></div>
<div style="position:absolute;left:1031.35px;top:749px;width:1.3px;height:147px;background:#222"></div>
<div style="position:absolute;left:395.3px;top:844.03px;font-size:15.1px;line-height:17.36px;height:17.36px;color:#111111;font-weight:normal;white-space:nowrap;font-family:'Liberation Sans', sans-serif;word-spacing:1.38px">Add the amounts above for qualifying children and other dependents. You may add to</div>
<div style="position:absolute;left:395.3px;top:861.93px;font-size:15.1px;line-height:17.36px;height:17.36px;color:#111111;font-weight:normal;white-space:nowrap;font-family:'Liberation Sans', sans-serif;word-spacing:0.5px">this the amount of any other credits. Enter the total here</div>
<div style="position:absolute;left:334px;top:879.00px;width:818.3px;height:1.6px;background:#333"></div>
<div style="position:absolute;left:395.3px;top:885.83px;font-size:15.1px;line-height:17.36px;height:17.36px;color:#111111;font-weight:normal;white-space:nowrap;font-family:'Liberation Sans', sans-serif;word-spacing:2.2px"><b>(a) Other income (not from jobs).</b> If you want tax withheld for other income you expect</div>
<div style="position:absolute;right:898px;top:800.33px;font-size:15.1px;line-height:17.36px;height:17.36px;color:#111111;font-weight:normal;white-space:nowrap;font-family:'Liberation Sans', sans-serif;"><b>Credit</b></div>
</div>
<div style="position:absolute;left:687.5px;top:844.5px;width:543.5px;height:50px;box-sizing:border-box;border-radius:10px;background:#333335;border:1px solid #434345"></div>
<div style="position:absolute;left:697.3px;top:860px;width:19.6px;height:19.6px;border-radius:50%;background:#545454"></div>
<svg style="position:absolute;left:704px;top:865px;width:6px;height:10px;overflow:visible" viewBox="0 0 6 10" ><path d="M1 1 L5 5 L1 9" fill="none" stroke="#eee" stroke-width="1.4" stroke-linecap="round" stroke-linejoin="round"/></svg>
<svg style="position:absolute;left:734px;top:860px;width:25px;height:20px;overflow:visible" viewBox="0 0 25 20" ><rect x="0.8" y="0.8" width="23.4" height="18.4" rx="3.5" fill="none" stroke="#f0f0f0" stroke-width="1.4"/><path d="M12.5 1 V19" stroke="#f0f0f0" stroke-width="1.4"/><path d="M4.5 5.5 H9 M4.5 9 H9 M4.5 12.5 H6.5 M16 5.5 H20.5 M16 9 H20.5 M16 12.5 H18" stroke="#f0f0f0" stroke-width="1.3"/></svg>
<svg style="position:absolute;left:784px;top:860px;width:27px;height:22px;overflow:visible" viewBox="0 0 27 22" ><path d="M8 16 H5 Q1 16 1 12 V5 Q1 1 5 1 H21.5 Q25.5 1 25.5 5 V12 Q25.5 16 21.5 16 H18.5" fill="none" stroke="#f0f0f0" stroke-width="1.5"/><path d="M13.2 15.2 L17 21 H9.4 Z" fill="none" stroke="#f0f0f0" stroke-width="1.4" stroke-linejoin="round"/></svg>
<div style="position:absolute;left:827.3px;top:862.7px;width:1px;height:14.6px;background:#555"></div>
<div style="position:absolute;left:840.2px;top:853px;width:29.4px;height:33.7px;border-radius:8px;background:#232323"></div>
<div style="position:absolute;left:840.2px;top:862.42px;font-size:15px;line-height:17.25px;height:17.25px;color:#f0f0f0;font-weight:normal;white-space:nowrap;font-family:'Liberation Sans', sans-serif;width:29.4px;text-align:center">1</div>
<div style="position:absolute;left:876px;top:861.97px;font-size:15.5px;line-height:17.82px;height:17.82px;color:#5e5e5e;font-weight:normal;white-space:nowrap;font-family:'Liberation Sans', sans-serif;">/ 4</div>
<svg style="position:absolute;left:918px;top:866.5px;width:14px;height:7px;overflow:visible" viewBox="0 0 14 7" ><path d="M0.7 6.3 L7 0.7 L13.3 6.3" fill="none" stroke="#505050" stroke-width="1.4" stroke-linecap="round" stroke-linejoin="round"/></svg>
<svg style="position:absolute;left:968.4px;top:867px;width:13.4px;height:7px;overflow:visible" viewBox="0 0 13.4 7" ><path d="M0.7 0.7 L6.7 6.3 L12.7 0.7" fill="none" stroke="#eaeaea" stroke-width="1.5" stroke-linecap="round" stroke-linejoin="round"/></svg>
<div style="position:absolute;left:1005.3px;top:862.7px;width:1px;height:14.6px;background:#555"></div>
<div style="position:absolute;left:1017.4px;top:853.4px;width:57.4px;height:33px;border-radius:9px;background:#232323"></div>
<div style="position:absolute;left:1017.4px;top:863.13px;font-size:14px;line-height:16.10px;height:16.10px;color:#f0f0f0;font-weight:normal;white-space:nowrap;font-family:'Liberation Sans', sans-serif;width:57.4px;text-align:center">100%</div>
<div style="position:absolute;left:1098.6px;top:868.8px;width:14px;height:1.5px;background:#eaeaea"></div>
<svg style="position:absolute;left:1148px;top:862px;width:14.5px;height:14.5px;overflow:visible" viewBox="0 0 14.5 14.5" ><path d="M7.25 0 V14.5 M0 7.25 H14.5" stroke="#eaeaea" stroke-width="1.5"/></svg>
<div style="position:absolute;left:1195px;top:860.6px;width:22.5px;height:18.8px;box-sizing:border-box;border:1.5px solid #eaeaea;border-radius:4px"></div>
<div style="position:absolute;left:1195px;top:865.40px;font-size:9.5px;line-height:10.92px;height:10.92px;color:#f0f0f0;font-weight:bold;white-space:nowrap;font-family:'Liberation Sans', sans-serif;width:22.5px;text-align:center">1:1</div>
<div style="position:absolute;left:292.5px;top:152px;width:644.5px;height:598.3px;border-radius:9px;background:#313132;box-shadow:0 0 0 1px rgba(255,255,255,0.05),0 12px 30px rgba(0,0,0,0.26),0 0 10px rgba(0,0,0,0.06)"></div>
<div style="position:absolute;left:313.4px;top:172.03px;font-size:14px;line-height:16.10px;height:16.10px;color:#f2f2f2;font-weight:normal;white-space:nowrap;font-family:'Liberation Sans', sans-serif;">UPDF Share</div>
<svg style="position:absolute;left:904px;top:171px;width:15.5px;height:15px;overflow:visible" viewBox="0 0 15.5 15" ><path d="M0.7 0.7 L14.8 14.3 M14.8 0.7 L0.7 14.3" stroke="#f0f0f0" stroke-width="1.5"/></svg>
<div style="position:absolute;left:292.5px;top:202.5px;width:644.5px;height:1.2px;background:#3b3b3c"></div>
<div style="position:absolute;left:323px;top:237.50px;font-size:20px;line-height:23.00px;height:23.00px;color:#ffffff;font-weight:bold;white-space:nowrap;font-family:'Liberation Sans', sans-serif;">Publish to the Web</div>
<div style="position:absolute;left:323px;top:273.33px;font-size:15.1px;line-height:17.36px;height:17.36px;color:#858585;font-weight:normal;white-space:nowrap;font-family:'Liberation Sans', sans-serif;">Upload your file to the cloud to send people a link to view online. Anyone with the link</div>
<div style="position:absolute;left:323px;top:293.13px;font-size:15.1px;line-height:17.36px;height:17.36px;color:#858585;font-weight:normal;white-space:nowrap;font-family:'Liberation Sans', sans-serif;">can access the file.</div>
<div style="position:absolute;left:323px;top:337px;width:583px;height:297px;border-radius:9px;background:#232324"></div>
<div style="position:absolute;left:382px;top:380px;width:165px;height:211px;background:#fff;overflow:hidden"><svg width="100%" height="100%" viewBox="0 0 165 211" preserveAspectRatio="none" style="position:absolute;left:0;top:0"><text x="15.5" y="13.6" font-size="6.2" font-weight="bold" font-family="Liberation Sans" fill="#111">W-4</text><path d="M10 12.5 H14" stroke="#999" stroke-width="0.8" stroke-dasharray="4.27 0.90"/><path d="M10 16.5 H28" stroke="#aaa" stroke-width="0.7" stroke-dasharray="3.06 0.90 6.56 0.90 2.51 0.90 5.75 0.90"/><path d="M10 18.2 H28" stroke="#aaa" stroke-width="0.7" stroke-dasharray="4.56 0.90 2.41 0.90 5.55 0.90 2.26 0.90"/><path d="M31.6 7 V19.8" stroke="#222" stroke-width="1.0"/><path d="M52 9.6 H113" stroke="#333" stroke-width="2.0" stroke-dasharray="10.34 1.20 6.70 1.20 6.91 1.20 10.25 1.20 14.27 1.20 7.24 1.20"/><path d="M37 13.3 H128" stroke="#777" stroke-width="0.8" stroke-dasharray="3.56 0.90 6.39 0.90 8.63 0.90 6.04 0.90 4.78 0.90 8.83 0.90 2.33 0.90 8.01 0.90 4.03 0.90 3.01 0.90 2.82 0.90 4.16 0.90 7.71 0.90 3.27 0.90 6.07 0.90"/><path d="M62 15.2 H102" stroke="#777" stroke-width="0.8" stroke-dasharray="6.47 0.90 4.61 0.90 5.83 0.90 2.44 0.90 2.42 0.90 3.44 0.90 6.76 0.90 4.99 0.90"/><path d="M58 17.2 H107" stroke="#777" stroke-width="0.8" stroke-dasharray="4.20 0.90 6.10 0.90 5.17 0.90 4.10 0.90 7.56 0.90 6.89 0.90 3.71 0.90 6.02 0.90"/><path d="M133 7 V19.8" stroke="#222" stroke-width="1.0"/><path d="M137 8.5 H155" stroke="#999" stroke-width="0.7" stroke-dasharray="5.68 0.90 8.13 0.90 7.11 0.90"/><path d="M133 10.5 H155" stroke="#555" stroke-width="0.5"/><text x="140" y="17.6" font-size="6.4" font-weight="bold" font-family="Liberation Sans" fill="#111"><tspan fill="#bbb">20</tspan>24</text><path d="M9.7 20.3 H155" stroke="#222" stroke-width="1.2"/><path d="M10 23.5 H21" stroke="#555" stroke-width="1.1" stroke-dasharray="5.15 0.90 7.92 0.90"/><path d="M10 27 H20" stroke="#555" stroke-width="1.1" stroke-dasharray="4.47 0.90 5.67 0.90"/><path d="M10 30 H22" stroke="#555" stroke-width="1.1" stroke-dasharray="7.03 0.90 4.61 0.90"/><path d="M10 33 H24" stroke="#555" stroke-width="1.1" stroke-dasharray="5.96 0.90 4.16 0.90 6.67 0.90"/><path d="M25 27 H155" stroke="#222" stroke-width="0.8"/><path d="M25 33 H127.6" stroke="#222" stroke-width="0.8"/><path d="M25 40.4 H127.6" stroke="#222" stroke-width="0.8"/><path d="M25 20.3 V49.5" stroke="#222" stroke-width="0.8"/><path d="M73.5 20.3 V27" stroke="#222" stroke-width="0.8"/><path d="M127.6 20.3 V40.4" stroke="#222" stroke-width="0.9"/><path d="M27 22.5 H60" stroke="#999" stroke-width="0.6" stroke-dasharray="7.35 0.90 6.01 0.90 8.13 0.90 4.20 0.90 6.87 0.90"/><path d="M76 22.5 H90" stroke="#999" stroke-width="0.6" stroke-dasharray="6.16 0.90 6.06 0.90"/><path d="M129 22.5 H152" stroke="#999" stroke-width="0.6" stroke-dasharray="5.19 0.90 7.88 0.90 8.61 0.90"/><path d="M27 28.8 H40" stroke="#999" stroke-width="0.6" stroke-dasharray="5.32 0.90 6.65 0.90"/><path d="M27 34.8 H55" stroke="#999" stroke-width="0.6" stroke-dasharray="2.42 0.90 6.91 0.90 6.53 0.90 8.95 0.90"/><path d="M129 30 H154" stroke="#777" stroke-width="0.8" stroke-dasharray="7.75 0.90 3.99 0.90 4.70 0.90 6.68 0.90"/><path d="M129 32 H154" stroke="#777" stroke-width="0.8" stroke-dasharray="2.16 0.90 5.23 0.90 3.18 0.90 2.82 0.90 2.41 0.90 7.38 0.90"/><path d="M129 34 H154" stroke="#777" stroke-width="0.8" stroke-dasharray="2.91 0.90 3.73 0.90 4.74 0.90 8.10 0.90 2.56 0.90"/><path d="M129 36 H154" stroke="#777" stroke-width="0.8" stroke-dasharray="5.14 0.90 5.85 0.90 8.18 0.90 7.73 0.90"/><path d="M129 38 H154" stroke="#777" stroke-width="0.8" stroke-dasharray="8.05 0.90 3.95 0.90 4.91 0.90 4.51 0.90"/><rect x="27.5" y="42.300000000000004" width="1.8" height="1.8" fill="#222"/><path d="M30.5 43.2 H60" stroke="#666" stroke-width="0.7" stroke-dasharray="8.19 0.90 8.70 0.90 3.06 0.90 3.23 0.90 3.62 0.90"/><rect x="27.5" y="44.5" width="1.8" height="1.8" fill="#222"/><path d="M30.5 45.4 H75" stroke="#666" stroke-width="0.7" stroke-dasharray="3.63 0.90 5.39 0.90 6.12 0.90 3.84 0.90 2.03 0.90 4.93 0.90 4.58 0.90 5.96 0.90 8.67 0.90"/><rect x="27.5" y="46.7" width="1.8" height="1.8" fill="#222"/><path d="M30.5 47.6 H140" stroke="#666" stroke-width="0.7" stroke-dasharray="6.83 0.90 5.61 0.90 6.32 0.90 6.73 0.90 2.38 0.90 8.30 0.90 7.46 0.90 8.12 0.90 7.59 0.90 4.75 0.90 4.79 0.90 2.72 0.90 6.44 0.90 2.44 0.90 2.47 0.90 3.46 0.90 3.14 0.90 4.38 0.90"/><path d="M9.7 49.5 H155" stroke="#222" stroke-width="1.0"/><path d="M10 53.0 H155" stroke="#555" stroke-width="0.8" stroke-dasharray="2.37 0.90 2.00 0.90 3.06 0.90 2.71 0.90 4.55 0.90 2.18 0.90 8.12 0.90 6.30 0.90 3.04 0.90 3.77 0.90 4.43 0.90 4.55 0.90 2.86 0.90 7.94 0.90 8.95 0.90 5.26 0.90 5.39 0.90 2.60 0.90 2.72 0.90 4.40 0.90 3.85 0.90 7.80 0.90 3.13 0.90 2.16 0.90 8.66 0.90 5.70 0.90 3.03 0.90"/><path d="M10 56.1 H110" stroke="#777" stroke-width="0.8" stroke-dasharray="5.80 0.90 2.19 0.90 5.70 0.90 8.85 0.90 8.04 0.90 6.87 0.90 3.83 0.90 4.57 0.90 3.17 0.90 7.40 0.90 5.73 0.90 7.45 0.90 4.31 0.90 3.56 0.90 7.68 0.90 8.89 0.90"/><path d="M9.7 59.6 H155" stroke="#222" stroke-width="1.0"/><path d="M10 62.2 H20" stroke="#555" stroke-width="1.1" stroke-dasharray="7.41 0.90 7.22 0.90"/><path d="M10 65.6 H23" stroke="#555" stroke-width="1.0" stroke-dasharray="7.27 0.90 6.96 0.90"/><path d="M10 68.6 H22" stroke="#555" stroke-width="1.0" stroke-dasharray="4.91 0.90 6.07 0.90"/><path d="M10 71.6 H18" stroke="#555" stroke-width="1.0" stroke-dasharray="5.42 0.90 4.12 0.90"/><path d="M37.5 62.2 H154" stroke="#7a7a7a" stroke-width="0.8" stroke-dasharray="2.20 0.90 3.96 0.90 3.81 0.90 6.85 0.90 8.70 0.90 5.13 0.90 8.56 0.90 8.92 0.90 8.69 0.90 4.55 0.90 3.54 0.90 3.59 0.90 3.38 0.90 3.43 0.90 6.37 0.90 8.30 0.90 7.88 0.90 5.36 0.90"/><path d="M37.5 65.4 H120" stroke="#7a7a7a" stroke-width="0.8" stroke-dasharray="6.57 0.90 7.60 0.90 2.59 0.90 6.62 0.90 8.37 0.90 7.48 0.90 7.25 0.90 5.35 0.90 3.25 0.90 7.52 0.90 4.33 0.90 7.61 0.90"/><path d="M37.5 68.5 H70" stroke="#7a7a7a" stroke-width="0.8" stroke-dasharray="8.80 0.90 4.77 0.90 4.81 0.90 8.63 0.90 7.07 0.90"/><path d="M41 72.4 H154" stroke="#7a7a7a" stroke-width="0.8" stroke-dasharray="3.19 0.90 2.89 0.90 3.06 0.90 8.33 0.90 7.65 0.90 3.02 0.90 7.79 0.90 8.86 0.90 6.60 0.90 4.45 0.90 5.84 0.90 2.92 0.90 2.10 0.90 8.80 0.90 6.55 0.90 5.69 0.90 8.54 0.90 5.04 0.90"/><path d="M41 75.3 H110" stroke="#7a7a7a" stroke-width="0.8" stroke-dasharray="8.10 0.90 7.78 0.90 3.48 0.90 3.76 0.90 4.05 0.90 3.68 0.90 6.11 0.90 3.82 0.90 4.93 0.90 2.92 0.90 8.37 0.90 4.48 0.90"/><path d="M41 79.1 H130" stroke="#7a7a7a" stroke-width="0.8" stroke-dasharray="5.21 0.90 6.08 0.90 8.33 0.90 4.94 0.90 8.42 0.90 5.51 0.90 5.72 0.90 5.66 0.90 2.13 0.90 5.08 0.90 3.28 0.90 2.03 0.90 7.59 0.90 3.21 0.90 5.31 0.90"/><path d="M41 82.9 H154" stroke="#7a7a7a" stroke-width="0.8" stroke-dasharray="7.08 0.90 5.90 0.90 4.28 0.90 5.63 0.90 5.89 0.90 7.49 0.90 2.74 0.90 5.92 0.90 3.74 0.90 3.94 0.90 7.41 0.90 5.55 0.90 5.93 0.90 7.32 0.90 8.39 0.90 5.10 0.90 6.29 0.90"/><path d="M41 86.1 H154" stroke="#7a7a7a" stroke-width="0.8" stroke-dasharray="5.54 0.90 5.59 0.90 6.85 0.90 5.17 0.90 5.73 0.90 5.35 0.90 8.59 0.90 6.89 0.90 8.14 0.90 8.60 0.90 3.82 0.90 5.92 0.90 8.60 0.90 7.88 0.90 2.96 0.90 2.85 0.90 5.09 0.90"/><path d="M41 88.9 H90" stroke="#7a7a7a" stroke-width="0.8" stroke-dasharray="2.51 0.90 3.68 0.90 2.51 0.90 6.69 0.90 7.49 0.90 8.28 0.90 3.08 0.90 7.01 0.90 6.62 0.90"/><rect x="37" y="71.60000000000001" width="1.8" height="1.6" fill="#444"/><rect x="37" y="78.3" width="1.8" height="1.6" fill="#444"/><rect x="37" y="82.10000000000001" width="1.8" height="1.6" fill="#444"/><rect x="151.3" y="87.3" width="3.3" height="3.3" fill="#555"/><path d="M10 94.5 H155" stroke="#555" stroke-width="0.8" stroke-dasharray="3.00 0.90 8.18 0.90 8.77 0.90 3.54 0.90 8.67 0.90 4.79 0.90 5.41 0.90 8.93 0.90 7.83 0.90 3.13 0.90 5.02 0.90 5.61 0.90 4.37 0.90 3.37 0.90 4.23 0.90 7.06 0.90 2.14 0.90 5.88 0.90 5.08 0.90 2.13 0.90 4.32 0.90 6.37 0.90 5.59 0.90 2.45 0.90"/><path d="M10 97.6 H120" stroke="#777" stroke-width="0.8" stroke-dasharray="8.90 0.90 7.52 0.90 8.80 0.90 2.73 0.90 3.86 0.90 2.28 0.90 7.45 0.90 3.89 0.90 2.91 0.90 4.96 0.90 8.38 0.90 7.73 0.90 3.81 0.90 3.05 0.90 8.43 0.90 5.99 0.90 6.90 0.90"/><path d="M9.7 101.3 H155" stroke="#222" stroke-width="1.0"/><path d="M10 104 H20" stroke="#555" stroke-width="1.0" stroke-dasharray="4.36 0.90 4.23 0.90"/><path d="M10 107 H21" stroke="#555" stroke-width="1.0" stroke-dasharray="6.75 0.90 5.70 0.90"/><path d="M10 110 H24" stroke="#555" stroke-width="1.0" stroke-dasharray="4.29 0.90 7.75 0.90 6.54 0.90"/><path d="M10 113 H20" stroke="#555" stroke-width="1.0" stroke-dasharray="7.21 0.90 4.33 0.90"/><path d="M30 104.2 H118" stroke="#888" stroke-width="0.7" stroke-dasharray="7.99 0.90 2.47 0.90 8.04 0.90 5.18 0.90 4.37 0.90 5.87 0.90 8.49 0.90 3.88 0.90 2.90 0.90 5.69 0.90 3.67 0.90 2.77 0.90 3.13 0.90 2.35 0.90 3.41 0.90 4.18 0.90"/><path d="M35 108.2 H100" stroke="#888" stroke-width="0.7" stroke-dasharray="4.14 0.90 7.32 0.90 4.03 0.90 5.50 0.90 3.25 0.90 4.43 0.90 2.13 0.90 3.75 0.90 2.11 0.90 7.13 0.90 5.86 0.90 3.33 0.90 5.32 0.90"/><path d="M35 112.3 H93" stroke="#888" stroke-width="0.7" stroke-dasharray="8.54 0.90 2.74 0.90 7.73 0.90 5.03 0.90 5.47 0.90 7.84 0.90 4.75 0.90 5.55 0.90 6.81 0.90"/><path d="M102 109 H120" stroke="#444" stroke-width="0.7"/><path d="M102 113.2 H120" stroke="#444" stroke-width="0.7"/><path d="M30 116.5 H125" stroke="#888" stroke-width="0.7" stroke-dasharray="8.88 0.90 4.40 0.90 7.83 0.90 6.95 0.90 6.45 0.90 4.83 0.90 4.43 0.90 2.38 0.90 2.91 0.90 2.50 0.90 7.19 0.90 3.79 0.90 3.14 0.90 2.59 0.90 7.89 0.90 8.09 0.90"/><path d="M30 119.2 H100" stroke="#888" stroke-width="0.7" stroke-dasharray="6.69 0.90 3.97 0.90 3.70 0.90 4.05 0.90 5.22 0.90 3.10 0.90 5.12 0.90 3.84 0.90 8.73 0.90 8.81 0.90 5.83 0.90 3.71 0.90"/><path d="M129.3 101.3 V147" stroke="#222" stroke-width="0.9"/><path d="M135.4 101.3 V147" stroke="#222" stroke-width="0.9"/><path d="M9.7 122.2 H155" stroke="#222" stroke-width="1.0"/><path d="M10 125 H20" stroke="#555" stroke-width="1.0" stroke-dasharray="7.86 0.90 5.24 0.90"/><path d="M10 128 H22" stroke="#555" stroke-width="1.0" stroke-dasharray="5.43 0.90 4.00 0.90 5.53 0.90"/><path d="M10 131 H20" stroke="#555" stroke-width="1.0" stroke-dasharray="5.90 0.90 6.01 0.90"/><path d="M10 134 H22" stroke="#555" stroke-width="1.0" stroke-dasharray="4.80 0.90 6.02 0.90"/><path d="M30 125.2 H126" stroke="#888" stroke-width="0.7" stroke-dasharray="2.03 0.90 3.85 0.90 2.63 0.90 4.80 0.90 2.29 0.90 2.16 0.90 4.13 0.90 3.63 0.90 6.10 0.90 5.70 0.90 7.25 0.90 6.60 0.90 7.01 0.90 8.15 0.90 4.73 0.90 4.28 0.90 8.89 0.90"/><path d="M30 127.8 H90" stroke="#888" stroke-width="0.7" stroke-dasharray="3.05 0.90 7.07 0.90 6.50 0.90 2.31 0.90 7.85 0.90 8.24 0.90 6.39 0.90 7.14 0.90 7.69 0.90"/><rect x="24.4" y="129.6" width="71.7" height="27.5" fill="none" stroke="#222" stroke-width="0.9"/><path d="M98 133.5 H126" stroke="#888" stroke-width="0.7" stroke-dasharray="2.98 0.90 5.67 0.90 5.53 0.90 7.84 0.90 7.63 0.90"/><path d="M98 136 H126" stroke="#888" stroke-width="0.7" stroke-dasharray="7.78 0.90 6.09 0.90 8.25 0.90 6.78 0.90"/><path d="M98 147.5 H120" stroke="#888" stroke-width="0.7" stroke-dasharray="6.85 0.90 3.61 0.90 2.22 0.90 2.93 0.90 4.52 0.90"/><rect x="99" y="150.2" width="26.6" height="8.8" fill="none" stroke="#222" stroke-width="0.9"/><path d="M129 131 H155" stroke="#222" stroke-width="0.8"/><path d="M129 142 H155" stroke="#222" stroke-width="0.8"/><path d="M129 150 H155" stroke="#222" stroke-width="0.8"/><path d="M9.7 156.6 H155" stroke="#222" stroke-width="1.0"/><path d="M10 160 H20" stroke="#555" stroke-width="1.0" stroke-dasharray="4.42 0.90 7.34 0.90"/><path d="M10 163 H18" stroke="#555" stroke-width="1.0" stroke-dasharray="6.23 0.90 6.51 0.90"/><path d="M10 166 H18" stroke="#555" stroke-width="1.0" stroke-dasharray="6.50 0.90 6.72 0.90"/><path d="M26 159.8 H150" stroke="#888" stroke-width="0.7" stroke-dasharray="5.43 0.90 2.02 0.90 7.58 0.90 7.24 0.90 5.52 0.90 5.75 0.90 6.62 0.90 2.46 0.90 7.16 0.90 3.77 0.90 2.52 0.90 3.86 0.90 7.11 0.90 3.44 0.90 7.18 0.90 8.83 0.90 5.46 0.90 4.68 0.90 5.35 0.90 6.79 0.90"/><path d="M27 166.8 H120" stroke="#222" stroke-width="0.8"/><path d="M125 166.8 H155" stroke="#222" stroke-width="0.8"/><path d="M28 168.8 H90" stroke="#666" stroke-width="0.8" stroke-dasharray="7.37 0.90 6.32 0.90 6.50 0.90 2.54 0.90 3.03 0.90 3.78 0.90 7.20 0.90 4.13 0.90 5.97 0.90 2.09 0.90 2.42 0.90 3.88 0.90"/><path d="M126 168.8 H132" stroke="#666" stroke-width="0.8" stroke-dasharray="6.70 0.90"/><path d="M25 156.6 V185.3" stroke="#222" stroke-width="0.9"/><path d="M9.7 172.3 H155" stroke="#222" stroke-width="1.0"/><path d="M10 175 H22" stroke="#555" stroke-width="1.0" stroke-dasharray="6.77 0.90 6.70 0.90"/><path d="M10 178 H18" stroke="#555" stroke-width="1.0" stroke-dasharray="5.16 0.90 6.07 0.90"/><path d="M27 174.8 H55" stroke="#999" stroke-width="0.6" stroke-dasharray="5.25 0.90 5.26 0.90 2.83 0.90 8.26 0.90 3.39 0.90"/><path d="M107 174.8 H118" stroke="#999" stroke-width="0.6" stroke-dasharray="8.85 0.90 8.55 0.90"/><path d="M128 174.8 H150" stroke="#999" stroke-width="0.6" stroke-dasharray="2.12 0.90 5.21 0.90 7.74 0.90 8.78 0.90"/><path d="M104.7 172.3 V185.3" stroke="#222" stroke-width="0.9"/><path d="M125.6 172.3 V185.3" stroke="#222" stroke-width="0.9"/><path d="M9.7 185.3 H155" stroke="#222" stroke-width="1.0"/><path d="M10 187.8 H60" stroke="#666" stroke-width="0.7" stroke-dasharray="5.15 0.90 3.88 0.90 3.47 0.90 8.62 0.90 3.47 0.90 6.07 0.90 2.99 0.90 5.67 0.90 8.67 0.90"/><path d="M88 187.8 H100" stroke="#999" stroke-width="0.6" stroke-dasharray="2.93 0.90 7.74 0.90"/><path d="M140 187.8 H155" stroke="#777" stroke-width="0.7" stroke-dasharray="5.56 0.90 8.21 0.90"/></svg></div>
<div style="position:absolute;left:610.7px;top:433.64px;font-size:18.3px;line-height:21.04px;height:21.04px;color:#ffffff;font-weight:bold;white-space:nowrap;font-family:'Liberation Sans', sans-serif;">fw4.pdf</div>
<svg style="position:absolute;left:615px;top:474px;width:22px;height:21px;overflow:visible" viewBox="0 0 22 21" ><path d="M1 9 L3.5 3 Q4.5 1 6.5 1 H15 Q17 1 18 3 L20.5 9" fill="none" stroke="#8a8a8a" stroke-width="1.4"/><rect x="1" y="9" width="19.5" height="10.5" rx="3.5" fill="none" stroke="#8a8a8a" stroke-width="1.4"/><circle cx="15.5" cy="14.2" r="1" fill="#8a8a8a"/></svg>
<div style="position:absolute;left:645.7px;top:478.33px;font-size:14px;line-height:16.10px;height:16.10px;color:#8a8a8a;font-weight:normal;white-space:nowrap;font-family:'Liberation Sans', sans-serif;letter-spacing:-0.45px">File Size:</div>
<div style="position:absolute;left:706px;top:478.06px;font-size:14.3px;line-height:16.45px;height:16.45px;color:#ffffff;font-weight:bold;white-space:nowrap;font-family:'Liberation Sans', sans-serif;">746 KB</div>
<svg style="position:absolute;left:616px;top:516.5px;width:20px;height:21.5px;overflow:visible" viewBox="0 0 20 21.5" ><rect x="1" y="1" width="18" height="19.5" rx="3.5" fill="none" stroke="#8a8a8a" stroke-width="1.4"/><text x="10" y="16.5" font-size="10.5" text-anchor="middle" fill="#8a8a8a" font-family="Liberation Sans">2</text></svg>
<div style="position:absolute;left:645.7px;top:520.15px;font-size:14.2px;line-height:16.33px;height:16.33px;color:#8a8a8a;font-weight:normal;white-space:nowrap;font-family:'Liberation Sans', sans-serif;letter-spacing:0.1px">Number of Pages:</div>
<div style="position:absolute;left:768px;top:520.06px;font-size:14.3px;line-height:16.45px;height:16.45px;color:#ffffff;font-weight:bold;white-space:nowrap;font-family:'Liberation Sans', sans-serif;">4</div>
<div style="position:absolute;left:310.5px;top:658.5px;width:608px;height:65.5px;box-sizing:border-box;border:5px solid #c490f8;border-radius:2px"></div>
<div style="position:absolute;left:323px;top:671px;width:583.5px;height:40px;border-radius:9px;background:#5651ea"></div>
<div style="position:absolute;left:323px;top:683.83px;font-size:14px;line-height:16.10px;height:16.10px;color:#f4f4ff;font-weight:normal;white-space:nowrap;font-family:'Liberation Sans', sans-serif;width:583.5px;text-align:center">Create Link</div>
</body></html>
